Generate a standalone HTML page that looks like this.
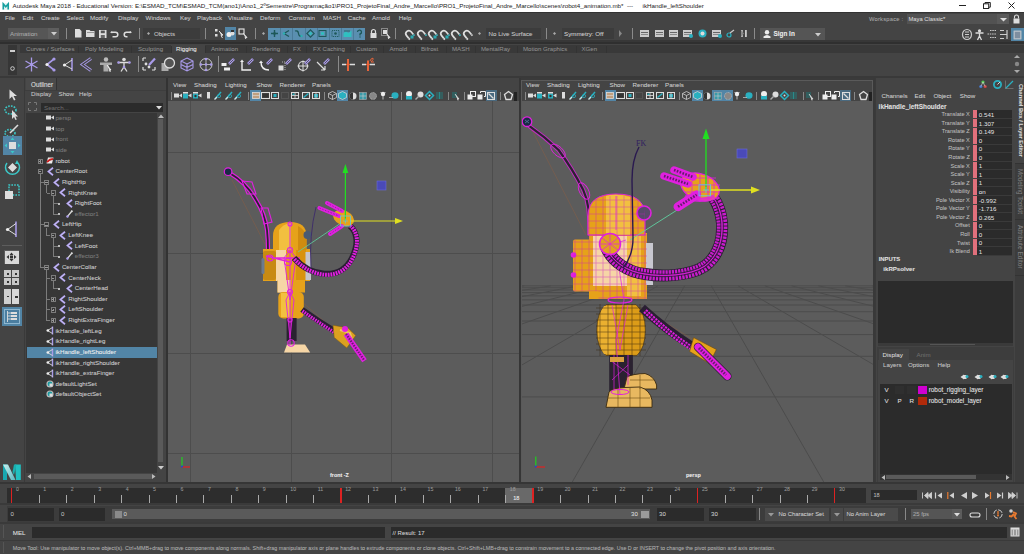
<!DOCTYPE html><html><head><meta charset="utf-8"><style>
*{margin:0;padding:0;box-sizing:border-box}
html,body{width:1024px;height:554px;overflow:hidden;background:#444;font-family:"Liberation Sans",sans-serif;font-size:6.2px;color:#c8c8c8}
.a{position:absolute}
.t{position:absolute;white-space:nowrap;line-height:1;-webkit-text-stroke:0.06px currentColor}
.f{position:absolute;background:#2b2b2b}
.sp{position:absolute;width:1px;background:#7a7a7a}
svg{position:absolute;overflow:visible}
</style></head><body>
<div class="a" style="left:0px;top:0px;width:1024px;height:12px;background:#fff;"></div>
<svg style="left:1.5px;top:2.5px;" width="7.5" height="7" viewBox="0 0 7.5 7"><rect x="0" y="0" width="7.5" height="7" fill="#e8f4f4"/><path d="M1.3 6.5V1L3.75 3.8L6.2 1V6.5" stroke="#17a0a0" stroke-width="1.6" fill="none"/></svg>
<div class="t" style="left:12.5px;top:2.6px;color:#1a1a1a;font-size:6.23px;-webkit-text-stroke:0">Autodesk Maya 2018 - Educational Version: E:\ESMAD_TCM\ESMAD_TCM(ano1)\Ano1_2ºSemestre\Programação1\PRO1_ProjetoFinal_Andre_Marcello\PRO1_ProjetoFinal_Andre_Marcello\scenes\robot4_animation.mb*</div>
<div class="t" style="left:627px;top:2.6px;color:#1a1a1a;font-size:6.2px;-webkit-text-stroke:0">---</div>
<div class="t" style="left:642.6px;top:2.6px;color:#1a1a1a;font-size:6.25px;-webkit-text-stroke:0">ikHandle_leftShoulder</div>
<div class="a" style="left:959px;top:5px;width:7px;height:1px;background:#222;"></div>
<svg style="left:983px;top:1.8px;" width="8" height="7" viewBox="0 0 8 7"><rect x="0.5" y="1.8" width="5.2" height="4.7" fill="none" stroke="#222" stroke-width="1"/><path d="M2 1.8V0.5H7.3V5.2H5.7" fill="none" stroke="#222" stroke-width="1"/></svg>
<svg style="left:1007.5px;top:1.8px;" width="7" height="7" viewBox="0 0 7 7"><path d="M0.5 0.5L6.5 6.5M6.5 0.5L0.5 6.5" stroke="#222" stroke-width="1"/></svg>
<div class="a" style="left:0px;top:12px;width:1024px;height:12px;background:#444;"></div>
<div class="a" style="left:0px;top:12px;width:1024px;height:1px;background:#333;"></div>
<div class="t" style="left:5px;top:14.8px;color:#cfcfcf">File</div>
<div class="t" style="left:22.5px;top:14.8px;color:#cfcfcf">Edit</div>
<div class="t" style="left:41px;top:14.8px;color:#cfcfcf">Create</div>
<div class="t" style="left:66.5px;top:14.8px;color:#cfcfcf">Select</div>
<div class="t" style="left:90px;top:14.8px;color:#cfcfcf">Modify</div>
<div class="t" style="left:118px;top:14.8px;color:#cfcfcf">Display</div>
<div class="t" style="left:145.6px;top:14.8px;color:#cfcfcf">Windows</div>
<div class="t" style="left:180px;top:14.8px;color:#cfcfcf">Key</div>
<div class="t" style="left:197px;top:14.8px;color:#cfcfcf">Playback</div>
<div class="t" style="left:228px;top:14.8px;color:#cfcfcf">Visualize</div>
<div class="t" style="left:260px;top:14.8px;color:#cfcfcf">Deform</div>
<div class="t" style="left:288.5px;top:14.8px;color:#cfcfcf">Constrain</div>
<div class="t" style="left:323px;top:14.8px;color:#cfcfcf">MASH</div>
<div class="t" style="left:347.8px;top:14.8px;color:#cfcfcf">Cache</div>
<div class="t" style="left:372px;top:14.8px;color:#cfcfcf">Arnold</div>
<div class="t" style="left:398.7px;top:14.8px;color:#cfcfcf">Help</div>
<div class="t" style="left:869px;top:16.6px;color:#a8a8a8;font-size:5.8px;letter-spacing:0.2px">Workspace :</div>
<div class="a" style="left:907px;top:14px;width:102px;height:10px;background:#525252;"></div>
<div class="a" style="left:997px;top:14px;width:12px;height:10px;background:#5a5a5a;"></div>
<svg style="left:999.5px;top:17.5px;" width="7" height="4" viewBox="0 0 7 4"><path d="M0 0H7L3.5 3.5Z" fill="#ddd"/></svg>
<div class="t" style="left:908.5px;top:16.5px;color:#d8d8d8;font-size:5.8px">Maya Classic*</div>
<svg style="left:1013px;top:14px;" width="7" height="10" viewBox="0 0 7 10"><path d="M1.5 4.5V3A2 2 0 0 1 5.5 3V4.5" stroke="#ddd" stroke-width="1.1" fill="none"/><rect x="0.5" y="4.5" width="6" height="5" fill="#ddd"/></svg>
<div class="a" style="left:0px;top:24px;width:1024px;height:18px;background:#444;"></div>
<div class="a" style="left:0px;top:40px;width:1024px;height:2px;background:#373737;"></div>
<div class="a" style="left:8px;top:28px;width:51px;height:11px;background:#565656;"></div>
<div class="a" style="left:48px;top:28px;width:11px;height:11px;background:#5e5e5e;"></div>
<svg style="left:50.5px;top:32px;" width="6" height="3.5" viewBox="0 0 6 3.5"><path d="M0 0H6L3 3.5Z" fill="#ccc"/></svg>
<div class="t" style="left:10px;top:31px;color:#a9a9a9">Animation</div>
<div class="sp" style="left:65.5px;top:27.5px;height:11px;background:#8a8a8a"></div>
<svg style="left:74.5px;top:29px;" width="7" height="9" viewBox="0 0 7 9"><path d="M0 0H4.5L6.5 2V8.5H0Z" fill="#ddd"/></svg>
<svg style="left:85.8px;top:30px;" width="9" height="7" viewBox="0 0 9 7"><path d="M0 0H3.5L4.5 1H8.5V7H0Z" fill="#ddd"/><path d="M1 2.5H8" stroke="#777" stroke-width="0.7"/></svg>
<svg style="left:98.7px;top:29.5px;" width="8" height="8" viewBox="0 0 8 8"><rect x="0" y="0" width="7.5" height="8" fill="#ddd"/><rect x="1.8" y="0.6" width="4" height="2.6" fill="#555"/><rect x="1.8" y="5" width="4" height="3" fill="#666"/></svg>
<svg style="left:110.4px;top:31px;" width="8.5" height="6.5" viewBox="0 0 8.5 6.5"><path d="M1.5 1.2H5.5A2.3 2.3 0 0 1 5.5 5.8H2.5" stroke="#ddd" stroke-width="1.5" fill="none"/><path d="M0 1.2L2.2 0V2.4Z" fill="#ddd"/></svg>
<svg style="left:122.5px;top:31px;" width="9" height="6.5" viewBox="0 0 9 6.5"><path d="M8 1.2H3.5A2.3 2.3 0 0 0 3.5 5.8H4.5" stroke="#ddd" stroke-width="1.5" fill="none"/><path d="M9 1.2L6.8 0V2.4Z" fill="#ddd"/></svg>
<div class="sp" style="left:139px;top:27.5px;height:11px;background:#8a8a8a"></div>
<div class="a" style="left:143px;top:28px;width:57px;height:11px;background:#3c3c3c;"></div>
<svg style="left:147px;top:32px;" width="3" height="3" viewBox="0 0 3 3"><path d="M0 1.5L1.5 0L3 1.5L1.5 3Z" fill="#aaa"/></svg>
<div class="t" style="left:154px;top:31px;color:#c8c8c8">Objects</div>
<div class="sp" style="left:205px;top:27.5px;height:11px;background:#8a8a8a"></div>
<svg style="left:214px;top:28px;" width="10" height="11" viewBox="0 0 10 11"><rect x="1" y="1" width="2.5" height="2.5" fill="#ddd"/><rect x="1" y="6" width="2.5" height="2.5" fill="#ddd"/><path d="M5 3L9 7L7 7.5L8.5 10" stroke="#ddd" stroke-width="1" fill="#ddd"/></svg>
<div class="a" style="left:225px;top:27px;width:11px;height:13px;background:#5285a6;"></div>
<svg style="left:226px;top:29px;" width="9" height="9" viewBox="0 0 9 9"><circle cx="3" cy="5.5" r="2.5" fill="#eee"/><circle cx="6.5" cy="4.5" r="2" fill="#ddd"/><rect x="5" y="1" width="3" height="2" fill="#333"/></svg>
<svg style="left:238px;top:28px;" width="10" height="11" viewBox="0 0 10 11"><rect x="1" y="1" width="5" height="5" fill="none" stroke="#ddd" stroke-width="1.2"/><path d="M5 5L9 9.5L7 9.6L8 11" stroke="#ddd" stroke-width="1" fill="#ddd"/></svg>
<div class="sp" style="left:255px;top:27.5px;height:11px;background:#8a8a8a"></div>
<svg style="left:262px;top:32px;" width="3" height="3" viewBox="0 0 3 3"><path d="M0 1.5L1.5 0L3 1.5L1.5 3Z" fill="#aaa"/></svg>
<div class="a" style="left:267.8px;top:27.6px;width:97.5px;height:12.3px;background:#5a8fb0;"></div>
<svg style="left:269.6px;top:29.3px;" width="9" height="9" viewBox="0 0 9 9"><path d="M4.5 1V8M1 4.5H8" stroke="#1d5858" stroke-width="1.4"/><circle cx="4.5" cy="4.5" r="1.3" fill="#1d5858"/></svg>
<div class="a" style="left:280.19px;top:27.6px;width:0.8px;height:12.3px;background:#4a7a98;"></div>
<svg style="left:281.79px;top:29.3px;" width="9" height="9" viewBox="0 0 9 9"><path d="M7 1.5L2 4.5L7 7.5" stroke="#1d5858" stroke-width="1.3" fill="none"/><circle cx="2" cy="4.5" r="1.2" fill="#2ab0b0"/></svg>
<div class="a" style="left:292.38px;top:27.6px;width:0.8px;height:12.3px;background:#4a7a98;"></div>
<svg style="left:293.98px;top:29.3px;" width="9" height="9" viewBox="0 0 9 9"><path d="M1 2Q4 1 4.5 4.5T8 7" stroke="#1d5858" stroke-width="1.3" fill="none"/><circle cx="7.5" cy="7" r="1.2" fill="#2ab0b0"/></svg>
<div class="a" style="left:304.57px;top:27.6px;width:0.8px;height:12.3px;background:#4a7a98;"></div>
<svg style="left:306.17px;top:29.3px;" width="9" height="9" viewBox="0 0 9 9"><path d="M4.5 0.8L8.2 4.5L4.5 8.2L0.8 4.5Z" stroke="#1d5858" stroke-width="1.1" fill="none"/><circle cx="4.5" cy="4.5" r="1.4" fill="#30c0c0"/></svg>
<div class="a" style="left:316.76px;top:27.6px;width:0.8px;height:12.3px;background:#4a7a98;"></div>
<svg style="left:318.36px;top:29.3px;" width="9" height="9" viewBox="0 0 9 9"><rect x="1" y="1.5" width="7" height="6" stroke="#1d5858" stroke-width="1" fill="none"/><rect x="3" y="3.2" width="3" height="2.6" fill="#30c0c0"/></svg>
<div class="a" style="left:328.95px;top:27.6px;width:0.8px;height:12.3px;background:#4a7a98;"></div>
<svg style="left:330.55px;top:29.3px;" width="9" height="9" viewBox="0 0 9 9"><rect x="1" y="1.5" width="7" height="6" stroke="#1d5858" stroke-width="0.9" fill="none" stroke-dasharray="1.2 0.8"/><circle cx="4.5" cy="4.5" r="1.3" fill="#1d5858"/></svg>
<div class="a" style="left:341.14px;top:27.6px;width:0.8px;height:12.3px;background:#4a7a98;"></div>
<svg style="left:342.74px;top:29.3px;" width="9" height="9" viewBox="0 0 9 9"><path d="M0.5 8V4L3 2.5L5.5 4L8.5 1.5V8Z" fill="#30c0c0"/><path d="M2 1V3M4 1V3M6 1V3" stroke="#1d5858" stroke-width="0.8"/></svg>
<div class="a" style="left:353.33px;top:27.6px;width:0.8px;height:12.3px;background:#4a7a98;"></div>
<svg style="left:354.93px;top:29.3px;" width="9" height="9" viewBox="0 0 9 9"><path d="M2.5 3A2 2 0 1 1 5 5V6.5" stroke="#1d5858" stroke-width="1.3" fill="none"/><circle cx="5" cy="8" r="0.7" fill="#1d5858"/></svg>
<svg style="left:370px;top:29px;" width="7" height="9" viewBox="0 0 7 9"><path d="M1.5 4V2.5A2 2 0 0 1 5.5 2.5V4" stroke="#ddd" stroke-width="1.2" fill="none"/><rect x="0.5" y="4" width="6" height="5" fill="#ddd"/></svg>
<svg style="left:381px;top:28px;" width="10" height="11" viewBox="0 0 10 11"><rect x="0.5" y="0.5" width="6" height="7" fill="none" stroke="#ccc" stroke-width="1" stroke-dasharray="1 1"/><rect x="2" y="2" width="4" height="4" fill="#ddd"/><path d="M5 5L9 9.5L7 9.6L8 11" stroke="#ddd" stroke-width="1" fill="#ddd"/></svg>
<div class="sp" style="left:395px;top:27.5px;height:11px;background:#8a8a8a"></div>
<svg style="left:404.0px;top:28.5px;" width="11" height="11" viewBox="0 0 11 11"><g transform="rotate(-40 5.5 5.5)"><path d="M2.5 8V4.5A3 3 0 0 1 8.5 4.5V8" stroke="#ddd" stroke-width="1.7" fill="none"/><rect x="1.6" y="8" width="1.8" height="1.6" fill="#ddd"/><rect x="7.6" y="8" width="1.8" height="1.6" fill="#3fb8c0"/></g><rect x="6.5" y="6.5" width="3" height="3" fill="#2aa8b0"/></svg>
<svg style="left:415.6px;top:28.5px;" width="11" height="11" viewBox="0 0 11 11"><g transform="rotate(-40 5.5 5.5)"><path d="M2.5 8V4.5A3 3 0 0 1 8.5 4.5V8" stroke="#ddd" stroke-width="1.7" fill="none"/><rect x="1.6" y="8" width="1.8" height="1.6" fill="#ddd"/><rect x="7.6" y="8" width="1.8" height="1.6" fill="#3fb8c0"/></g></svg>
<svg style="left:427.2px;top:28.5px;" width="11" height="11" viewBox="0 0 11 11"><g transform="rotate(-40 5.5 5.5)"><path d="M2.5 8V4.5A3 3 0 0 1 8.5 4.5V8" stroke="#ddd" stroke-width="1.7" fill="none"/><rect x="1.6" y="8" width="1.8" height="1.6" fill="#ddd"/><rect x="7.6" y="8" width="1.8" height="1.6" fill="#3fb8c0"/></g><rect x="6.5" y="6.5" width="3" height="3" fill="#2aa8b0"/></svg>
<svg style="left:438.8px;top:28.5px;" width="11" height="11" viewBox="0 0 11 11"><g transform="rotate(-40 5.5 5.5)"><path d="M2.5 8V4.5A3 3 0 0 1 8.5 4.5V8" stroke="#ddd" stroke-width="1.7" fill="none"/><rect x="1.6" y="8" width="1.8" height="1.6" fill="#ddd"/><rect x="7.6" y="8" width="1.8" height="1.6" fill="#3fb8c0"/></g><rect x="6.5" y="6.5" width="3" height="3" fill="#2aa8b0"/></svg>
<svg style="left:450.4px;top:28.5px;" width="11" height="11" viewBox="0 0 11 11"><g transform="rotate(-40 5.5 5.5)"><path d="M2.5 8V4.5A3 3 0 0 1 8.5 4.5V8" stroke="#ddd" stroke-width="1.7" fill="none"/><rect x="1.6" y="8" width="1.8" height="1.6" fill="#ddd"/><rect x="7.6" y="8" width="1.8" height="1.6" fill="#3fb8c0"/></g></svg>
<svg style="left:462.0px;top:28.5px;" width="11" height="11" viewBox="0 0 11 11"><g transform="rotate(-40 5.5 5.5)"><path d="M2.5 8V4.5A3 3 0 0 1 8.5 4.5V8" stroke="#ddd" stroke-width="1.7" fill="none"/><rect x="1.6" y="8" width="1.8" height="1.6" fill="#ddd"/><rect x="7.6" y="8" width="1.8" height="1.6" fill="#ccc"/></g></svg>
<svg style="left:478px;top:32px;" width="3" height="3" viewBox="0 0 3 3"><path d="M0 1.5L1.5 0L3 1.5L1.5 3Z" fill="#aaa"/></svg>
<div class="a" style="left:486px;top:28px;width:55px;height:11px;background:#3c3c3c;"></div>
<div class="t" style="left:488.5px;top:31px;color:#c8c8c8">No Live Surface</div>
<div class="sp" style="left:546px;top:27.5px;height:11px;background:#8a8a8a"></div>
<svg style="left:553px;top:32px;" width="3" height="3" viewBox="0 0 3 3"><path d="M0 1.5L1.5 0L3 1.5L1.5 3Z" fill="#aaa"/></svg>
<div class="a" style="left:562px;top:28px;width:52px;height:11px;background:#3c3c3c;"></div>
<div class="t" style="left:564px;top:31px;color:#d0d0d0">Symmetry: Off</div>
<svg style="left:619px;top:30px;" width="3" height="7" viewBox="0 0 3 7"><path d="M0 0L3 3.5L0 7Z" fill="#888"/></svg>
<div class="sp" style="left:631.5px;top:27.5px;height:11px;background:#8a8a8a"></div>
<svg style="left:640px;top:29px;" width="10" height="9" viewBox="0 0 10 9"><rect x="0" y="1" width="9" height="7" fill="#ccc"/><rect x="1" y="3" width="7" height="1" fill="#666"/><rect x="1" y="5" width="7" height="1" fill="#888"/></svg>
<svg style="left:654.5px;top:29px;" width="10" height="9" viewBox="0 0 10 9"><rect x="0" y="1" width="9" height="7" fill="#ccc"/><rect x="1" y="3" width="7" height="1" fill="#666"/><rect x="1" y="5" width="7" height="1" fill="#888"/></svg>
<svg style="left:668.5px;top:29px;" width="10" height="9" viewBox="0 0 10 9"><rect x="0" y="1" width="9" height="7" fill="#ccc"/><rect x="1" y="3" width="7" height="1" fill="#666"/><rect x="1" y="5" width="7" height="1" fill="#888"/></svg>
<svg style="left:683px;top:29px;" width="10" height="9" viewBox="0 0 10 9"><rect x="0" y="1" width="9" height="7" fill="#ccc"/><rect x="1" y="3" width="7" height="1" fill="#666"/><rect x="1" y="5" width="7" height="1" fill="#888"/><circle cx="8" cy="7" r="2" fill="#2ab0c0"/></svg>
<svg style="left:697.5px;top:29px;" width="9" height="9" viewBox="0 0 9 9"><circle cx="4.5" cy="4.5" r="4" fill="#2ab0c0"/><circle cx="4.5" cy="4.5" r="2" fill="#ddd"/></svg>
<svg style="left:712px;top:29px;" width="10" height="9" viewBox="0 0 10 9"><rect x="0" y="1" width="9" height="7" fill="#ccc"/><rect x="1" y="3" width="7" height="1" fill="#666"/><rect x="1" y="5" width="7" height="1" fill="#888"/><circle cx="8" cy="7" r="2" fill="#2ab0c0"/></svg>
<svg style="left:726px;top:29px;" width="9" height="9" viewBox="0 0 9 9"><circle cx="3" cy="6" r="2" fill="none" stroke="#2ab0c0" stroke-width="1.2"/><path d="M4 4L8 1" stroke="#ccc" stroke-width="1.2"/></svg>
<svg style="left:740px;top:29px;" width="8" height="9" viewBox="0 0 8 9"><rect x="1" y="1" width="1.8" height="7" fill="#ccc"/><rect x="5" y="1" width="1.8" height="7" fill="#ccc"/></svg>
<svg style="left:741px;top:30px;" width="3" height="7" viewBox="0 0 3 7"><path d="M0 0L3 3.5L0 7Z" fill="#888"/></svg>
<div class="sp" style="left:754px;top:27.5px;height:11px;background:#8a8a8a"></div>
<div class="a" style="left:760px;top:27.5px;width:65px;height:12.5px;background:#555;"></div>
<svg style="left:763px;top:29.5px;" width="8" height="8" viewBox="0 0 8 8"><circle cx="4" cy="2.3" r="2.2" fill="#eee"/><path d="M0.5 8V6.5Q4 3.5 7.5 6.5V8Z" fill="#eee"/></svg>
<div class="t" style="left:773.5px;top:31px;color:#eee;font-weight:bold;font-size:6.4px">Sign In</div>
<svg style="left:815px;top:32.5px;" width="6" height="3.5" viewBox="0 0 6 3.5"><path d="M0 0H6L3 3.5Z" fill="#ccc"/></svg>
<svg style="left:962px;top:28.5px;" width="10" height="11" viewBox="0 0 10 11"><ellipse cx="5" cy="5.5" rx="4.5" ry="5" fill="none" stroke="#ccc" stroke-width="1.2"/><path d="M3 3H7M3 5.5H7M3 8H7" stroke="#ccc" stroke-width="1"/></svg>
<svg style="left:975px;top:28.5px;" width="9" height="11" viewBox="0 0 9 11"><circle cx="4.5" cy="1.8" r="1.6" fill="#ddd"/><path d="M0.5 4H8.5M4.5 4V7M2.5 11L4.5 7L6.5 11" stroke="#ddd" stroke-width="1.3" fill="none"/></svg>
<svg style="left:987px;top:28.5px;" width="10" height="11" viewBox="0 0 10 11"><path d="M3 1.5H9M0.5 5H9M3 8.5H9" stroke="#ccc" stroke-width="1.2" stroke-dasharray="1.5 0.8"/></svg>
<svg style="left:999px;top:28.5px;" width="9" height="11" viewBox="0 0 9 11"><path d="M1 1.5H5M1 5.5H8M1 9.5H5M8 1V10" stroke="#ccc" stroke-width="1.2"/></svg>
<div class="a" style="left:1010.5px;top:28px;width:13.5px;height:12.5px;background:#5285a6;"></div>
<svg style="left:1013px;top:29.5px;" width="9" height="10" viewBox="0 0 9 10"><rect x="1" y="1" width="7" height="8" fill="#9ab" stroke="#ccc" stroke-width="0.8"/><path d="M2 3H7M2 5H7M2 7H7" stroke="#567" stroke-width="0.8"/></svg>
<div class="a" style="left:0px;top:42px;width:1024px;height:36px;background:#444;"></div>
<div class="a" style="left:0px;top:42px;width:1024px;height:2px;background:#2f2f2f;"></div>
<div class="a" style="left:8px;top:45px;width:9px;height:30px;background:#363636;"></div>
<div class="a" style="left:10px;top:50px;width:5px;height:2px;background:#cfcfcf;"></div>
<svg style="left:10px;top:66px;" width="5" height="5" viewBox="0 0 5 5"><circle cx="2.5" cy="2.5" r="1.8" fill="none" stroke="#ccc" stroke-width="1"/></svg>
<div class="a" style="left:20px;top:44.8px;width:1004px;height:7.8px;background:#393939;"></div>
<div class="t" style="left:26px;top:45.9px;color:#8e8e8e;font-size:6.1px">Curves / Surfaces</div>
<div class="t" style="left:85px;top:45.9px;color:#8e8e8e;font-size:6.1px">Poly Modeling</div>
<div class="t" style="left:138px;top:45.9px;color:#8e8e8e;font-size:6.1px">Sculpting</div>
<div class="a" style="left:171px;top:44.8px;width:34px;height:9px;background:#444;"></div>
<div class="t" style="left:176px;top:45.9px;color:#e8e8e8;font-size:6.1px">Rigging</div>
<div class="t" style="left:211px;top:45.9px;color:#8e8e8e;font-size:6.1px">Animation</div>
<div class="t" style="left:252px;top:45.9px;color:#8e8e8e;font-size:6.1px">Rendering</div>
<div class="t" style="left:293px;top:45.9px;color:#8e8e8e;font-size:6.1px">FX</div>
<div class="t" style="left:313px;top:45.9px;color:#8e8e8e;font-size:6.1px">FX Caching</div>
<div class="t" style="left:356px;top:45.9px;color:#8e8e8e;font-size:6.1px">Custom</div>
<div class="t" style="left:389.5px;top:45.9px;color:#8e8e8e;font-size:6.1px">Arnold</div>
<div class="t" style="left:421px;top:45.9px;color:#8e8e8e;font-size:6.1px">Bifrost</div>
<div class="t" style="left:452px;top:45.9px;color:#8e8e8e;font-size:6.1px">MASH</div>
<div class="t" style="left:481px;top:45.9px;color:#8e8e8e;font-size:6.1px">MentalRay</div>
<div class="t" style="left:523px;top:45.9px;color:#8e8e8e;font-size:6.1px">Motion Graphics</div>
<div class="t" style="left:581.5px;top:45.9px;color:#8e8e8e;font-size:6.1px">XGen</div>
<div class="a" style="left:78px;top:46px;width:1px;height:7px;background:#333;"></div>
<div class="a" style="left:131px;top:46px;width:1px;height:7px;background:#333;"></div>
<div class="a" style="left:171px;top:46px;width:1px;height:7px;background:#333;"></div>
<div class="a" style="left:205px;top:46px;width:1px;height:7px;background:#333;"></div>
<div class="a" style="left:246px;top:46px;width:1px;height:7px;background:#333;"></div>
<div class="a" style="left:287px;top:46px;width:1px;height:7px;background:#333;"></div>
<div class="a" style="left:306px;top:46px;width:1px;height:7px;background:#333;"></div>
<div class="a" style="left:350px;top:46px;width:1px;height:7px;background:#333;"></div>
<div class="a" style="left:383px;top:46px;width:1px;height:7px;background:#333;"></div>
<div class="a" style="left:415px;top:46px;width:1px;height:7px;background:#333;"></div>
<div class="a" style="left:446px;top:46px;width:1px;height:7px;background:#333;"></div>
<div class="a" style="left:475px;top:46px;width:1px;height:7px;background:#333;"></div>
<div class="a" style="left:517px;top:46px;width:1px;height:7px;background:#333;"></div>
<div class="a" style="left:576px;top:46px;width:1px;height:7px;background:#333;"></div>
<div class="a" style="left:606px;top:46px;width:1px;height:7px;background:#333;"></div>
<svg style="left:24.5px;top:56.5px;" width="14" height="15" viewBox="0 0 14 15"><path d="M6.5 0.5V14.5M0.5 4L12.5 11M12.5 4L0.5 11" stroke="#a89ae8" stroke-width="1.3"/><circle cx="6.5" cy="7.5" r="1.5" fill="#a89ae8"/></svg>
<svg style="left:44px;top:56.5px;" width="14" height="15" viewBox="0 0 14 15"><path d="M10 2L3 7.5L10 13" stroke="#a89ae8" stroke-width="1.6" fill="none"/><circle cx="10" cy="2" r="1.6" fill="#a89ae8"/><circle cx="3" cy="7.5" r="1.6" fill="#eee"/><circle cx="10" cy="13" r="1.6" fill="#a89ae8"/></svg>
<svg style="left:62px;top:56.5px;" width="14" height="15" viewBox="0 0 14 15"><path d="M10 1V14" stroke="#a89ae8" stroke-width="1.5"/><path d="M10 3L2.5 8L10 12" stroke="#ddd" stroke-width="1" fill="none"/><circle cx="2.5" cy="8" r="1.6" fill="#eee"/></svg>
<svg style="left:80px;top:56.5px;" width="14" height="15" viewBox="0 0 14 15"><path d="M11 1.5L2.5 7.5L11 13.5" stroke="#a89ae8" stroke-width="3.2" fill="none"/><path d="M11 1.5L2.5 7.5L11 13.5" stroke="#444" stroke-width="1.4" fill="none"/></svg>
<svg style="left:99px;top:56.5px;" width="14" height="15" viewBox="0 0 14 15"><circle cx="7" cy="2.5" r="2.2" fill="#bbb"/><path d="M1 5.5H13V8H9.5V14.5H4.5V8H1Z" fill="#aaa"/><path d="M8 8L12 13L10.5 13.2L11.3 15" stroke="#eee" stroke-width="1" fill="#eee"/></svg>
<svg style="left:117px;top:56.5px;" width="14" height="15" viewBox="0 0 14 15"><circle cx="7" cy="2.5" r="1.8" fill="#ddd"/><path d="M1 5.5H13M7 5.5V10M4 14.5L7 10L10 14.5" stroke="#ddd" stroke-width="1.3" fill="none"/><circle cx="1.5" cy="5.5" r="1.3" fill="#a89ae8"/><circle cx="12.5" cy="5.5" r="1.3" fill="#a89ae8"/><circle cx="7" cy="10" r="1.3" fill="#a89ae8"/></svg>
<div class="sp" style="left:137.5px;top:56px;height:16px;background:#8a8a8a"></div>
<svg style="left:142px;top:56.5px;" width="14" height="15" viewBox="0 0 14 15"><path d="M1 1H4M1 13H4M10 13H13M1 1V4M1 10V13M13 10V13" stroke="#ddd" stroke-width="1.2"/><circle cx="4" cy="7" r="1.4" fill="#ddd"/><circle cx="7" cy="10" r="1.4" fill="#ddd"/><path d="M7 8L13 1.5" stroke="#a89ae8" stroke-width="2.2"/></svg>
<svg style="left:161px;top:56.5px;" width="14" height="15" viewBox="0 0 14 15"><rect x="0.5" y="6" width="7" height="8" fill="#aaa"/><circle cx="8.5" cy="6" r="5" fill="#555" stroke="#ddd" stroke-width="1.3"/></svg>
<svg style="left:180px;top:56.5px;" width="14" height="15" viewBox="0 0 14 15"><path d="M7 1L13 4V11L7 14L1 11V4Z M1 4L7 7L13 4 M7 7V14 M1 7.5L7 10.5L13 7.5" stroke="#a89ae8" stroke-width="1.1" fill="none"/></svg>
<svg style="left:199px;top:56.5px;" width="14" height="15" viewBox="0 0 14 15"><circle cx="7" cy="7.5" r="6" stroke="#ccc" stroke-width="1" fill="none"/><path d="M1 7.5H13M7 1.5V13.5" stroke="#ccc" stroke-width="0.8"/><circle cx="7" cy="2" r="1.3" fill="#a89ae8"/><circle cx="7" cy="13" r="1.3" fill="#a89ae8"/><circle cx="2" cy="7.5" r="1.3" fill="#a89ae8"/><circle cx="12" cy="7.5" r="1.3" fill="#a89ae8"/><circle cx="7" cy="7.5" r="1.3" fill="#a89ae8"/></svg>
<div class="sp" style="left:218px;top:56px;height:16px;background:#8a8a8a"></div>
<svg style="left:221px;top:56.5px;" width="14" height="15" viewBox="0 0 14 15"><rect x="0.5" y="6" width="5" height="3" fill="#eee"/><rect x="3" y="10.5" width="6" height="3" fill="#eee"/><path d="M8 7L13 2" stroke="#a89ae8" stroke-width="2.6"/><path d="M8.5 6.5L12.5 2.5" stroke="#444" stroke-width="0.8"/></svg>
<svg style="left:240px;top:56.5px;" width="14" height="15" viewBox="0 0 14 15"><path d="M2 4V13H11" stroke="#eee" stroke-width="1.4" fill="none"/><path d="M0 5L2 2.5L4 5" fill="#eee"/><path d="M8 7L13 2" stroke="#a89ae8" stroke-width="2.6"/><path d="M8.5 6.5L12.5 2.5" stroke="#444" stroke-width="0.8"/></svg>
<svg style="left:259px;top:56.5px;" width="14" height="15" viewBox="0 0 14 15"><path d="M2 5Q2 13 10 13" stroke="#eee" stroke-width="1.4" fill="none"/><path d="M0 6L2 3.5L4 6" fill="#eee"/><path d="M8 7L13 2" stroke="#a89ae8" stroke-width="2.6"/><path d="M8.5 6.5L12.5 2.5" stroke="#444" stroke-width="0.8"/></svg>
<svg style="left:278px;top:56.5px;" width="14" height="15" viewBox="0 0 14 15"><rect x="0.5" y="8.5" width="5" height="5" fill="#ddd"/><path d="M4 5H7V13" stroke="#ccc" stroke-width="0.8" stroke-dasharray="1 1" fill="none"/><path d="M8 7L13 2" stroke="#a89ae8" stroke-width="2.6"/><path d="M8.5 6.5L12.5 2.5" stroke="#444" stroke-width="0.8"/></svg>
<svg style="left:297px;top:56.5px;" width="14" height="15" viewBox="0 0 14 15"><circle cx="6" cy="9" r="4.5" fill="none" stroke="#ddd" stroke-width="1.2"/><path d="M0.5 9H11.5M6 3.5V14.5" stroke="#ddd" stroke-width="1"/><path d="M8 7L13 2" stroke="#a89ae8" stroke-width="2.6"/><path d="M8.5 6.5L12.5 2.5" stroke="#444" stroke-width="0.8"/></svg>
<svg style="left:316px;top:56.5px;" width="14" height="15" viewBox="0 0 14 15"><path d="M1 5L9 13M9 13V9M9 13H5" stroke="#ddd" stroke-width="1.2" fill="none"/><path d="M8 7L13 2" stroke="#a89ae8" stroke-width="2.6"/><path d="M8.5 6.5L12.5 2.5" stroke="#444" stroke-width="0.8"/></svg>
<div class="sp" style="left:337.5px;top:56px;height:16px;background:#8a8a8a"></div>
<svg style="left:341px;top:56.5px;" width="14" height="15" viewBox="0 0 14 15"><path d="M1 7.5H5M9 7.5H14" stroke="#ddd" stroke-width="1.3"/><path d="M7 2V14" stroke="#e8643a" stroke-width="2"/><path d="M5 7.5H9" stroke="#e8643a" stroke-width="1.3"/></svg>
<svg style="left:361px;top:56.5px;" width="14" height="15" viewBox="0 0 14 15"><path d="M1 7.5H5M9 7.5H14" stroke="#ddd" stroke-width="1.3"/><path d="M7 3.5V14" stroke="#e8643a" stroke-width="2"/><path d="M5 7.5H9" stroke="#e8643a" stroke-width="1.3"/><path d="M9 4Q10 1 12 1.2Q13 2 10 5H13" stroke="#e8643a" stroke-width="1" fill="none"/></svg>
<div class="a" style="left:0px;top:76px;width:1024px;height:2px;background:#393939;"></div>
<svg style="left:1014px;top:55px;" width="6" height="18" viewBox="0 0 6 18"><path d="M0 3L3 0L6 3Z" fill="#aaa"/><circle cx="3" cy="9" r="2.2" fill="#888"/><path d="M0 15L3 18L6 15Z" fill="#aaa"/></svg>
<div class="a" style="left:0px;top:78px;width:1024px;height:406px;background:#3a3a3a;"></div>
<div class="a" style="left:0px;top:78px;width:23.5px;height:406px;background:#444;"></div>
<svg style="left:8.5px;top:88.5px;" width="9" height="12" viewBox="0 0 9 12"><path d="M0.5 0.5V10L3 7.5L5 11.5L6.5 10.8L4.6 7H8Z" fill="#ddd"/></svg>
<svg style="left:4px;top:105px;" width="16" height="15" viewBox="0 0 16 15"><ellipse cx="6.5" cy="5" rx="5.5" ry="4" fill="none" stroke="#3cc8c8" stroke-width="1.6" stroke-dasharray="1.6 1.2"/><path d="M8 5V14L10 12L11.5 15L12.8 14.4L11.4 11.5H14Z" fill="#ddd"/></svg>
<svg style="left:4px;top:124px;" width="16" height="14" viewBox="0 0 16 14"><ellipse cx="6" cy="9" rx="5" ry="3.5" fill="none" stroke="#3cc8c8" stroke-width="1.6" stroke-dasharray="1.6 1.2"/><path d="M6 9L14 1" stroke="#ddd" stroke-width="1.6"/></svg>
<div class="a" style="left:3px;top:136px;width:19px;height:19px;background:#5285a6;"></div>
<svg style="left:4px;top:137px;" width="17" height="17" viewBox="0 0 17 17"><rect x="5" y="5" width="7" height="7" fill="#ddd"/><path d="M8.5 0.5L6.5 3H10.5Z M8.5 16.5L6.5 14H10.5Z M0.5 8.5L3 6.5V10.5Z M16.5 8.5L14 6.5V10.5Z" fill="#3cc8c8"/></svg>
<svg style="left:4px;top:159px;" width="17" height="18" viewBox="0 0 17 18"><path d="M8.5 4L13 8.5L8.5 13L4 8.5Z" fill="#ddd"/><path d="M3 4A7 7 0 1 0 14 4" stroke="#3cc8c8" stroke-width="1.5" fill="none"/><path d="M13 1L15 5L11 5Z" fill="#3cc8c8"/></svg>
<svg style="left:4px;top:183px;" width="17" height="18" viewBox="0 0 17 18"><rect x="1" y="8" width="8" height="8" fill="#ddd"/><path d="M5 8V2H15V12H9" stroke="#3cc8c8" stroke-width="1.5" fill="none" stroke-dasharray="1.6 1.2"/></svg>
<svg style="left:5px;top:221px;" width="14" height="17" viewBox="0 0 14 17"><path d="M11 0.5V16" stroke="#a89ae8" stroke-width="1.6"/><path d="M11 2.5L2.5 8.5L11 14" stroke="#ddd" stroke-width="1" fill="none"/><circle cx="2.5" cy="8.5" r="1.6" fill="#eee"/></svg>
<div class="a" style="left:2px;top:244.5px;width:19.5px;height:1px;background:#5d5d5d;"></div>
<div class="a" style="left:4px;top:250px;width:15px;height:14px;background:#5c5c5c;"></div>
<div class="a" style="left:4.5px;top:250.5px;width:14px;height:13px;background:#d8d8d8;"></div>
<svg style="left:6px;top:252px;" width="11" height="10" viewBox="0 0 11 10"><path d="M5.5 0.5L3.5 3H7.5Z M5.5 9.5L3.5 7H7.5Z M0.5 5L3 3V7Z M10.5 5L8 3V7Z" fill="#333"/><rect x="4" y="3.5" width="3" height="3" fill="#333"/></svg>
<div class="a" style="left:4px;top:270px;width:7px;height:7px;background:#c8c8c8;"></div>
<div class="a" style="left:6.5px;top:272.5px;width:2px;height:2px;background:#333;"></div>
<div class="a" style="left:12px;top:270px;width:7px;height:7px;background:#c8c8c8;"></div>
<div class="a" style="left:14.5px;top:272.5px;width:2px;height:2px;background:#333;"></div>
<div class="a" style="left:4px;top:278px;width:7px;height:7px;background:#c8c8c8;"></div>
<div class="a" style="left:6.5px;top:280.5px;width:2px;height:2px;background:#333;"></div>
<div class="a" style="left:12px;top:278px;width:7px;height:7px;background:#c8c8c8;"></div>
<div class="a" style="left:14.5px;top:280.5px;width:2px;height:2px;background:#333;"></div>
<div class="a" style="left:4px;top:289px;width:7px;height:15px;background:#cfcfcf;"></div>
<div class="a" style="left:12px;top:289px;width:7px;height:15px;background:#d8d8d8;"></div>
<div class="a" style="left:6.5px;top:296px;width:2px;height:1px;background:#333;"></div>
<div class="a" style="left:14.5px;top:295.5px;width:3px;height:2px;background:#333;"></div>
<div class="a" style="left:2px;top:306.5px;width:19.5px;height:19.5px;background:#5285a6;"></div>
<div class="a" style="left:4px;top:308.5px;width:15.5px;height:15.5px;background:#4b7ea0;border:1px solid #8fb7d0"></div>
<svg style="left:6px;top:310px;" width="12" height="13" viewBox="0 0 12 13"><path d="M1.5 1V12M1.5 3H5M1.5 6H5M1.5 9H5" stroke="#ddd" stroke-width="0.9" fill="none"/><rect x="5" y="2" width="6" height="2" fill="#ddd"/><rect x="5" y="5" width="6" height="2" fill="#ddd"/><rect x="5" y="8" width="6" height="2" fill="#ddd"/></svg>
<svg style="left:2px;top:464px;" width="20" height="17" viewBox="0 0 20 17"><defs><linearGradient id="mg" x1="0" y1="0" x2="1" y2="1"><stop offset="0" stop-color="#c8f0f0"/><stop offset="1" stop-color="#5ab8c0"/></linearGradient></defs><path d="M1 0.5H5V16H1Z" fill="#18a8b0"/><path d="M13 0.5H18.8V16H14Z" fill="#20c0c0"/><path d="M1 0.5H6L13.5 16H9Z" fill="url(#mg)"/><path d="M12 0.5H14.5L12 11L10.5 8Z" fill="#18b0b0"/></svg>
<div class="a" style="left:24.5px;top:78px;width:141.5px;height:406px;background:#444;"></div>
<div class="a" style="left:25.5px;top:78px;width:30px;height:12px;background:#4a4a4a;"></div>
<div class="t" style="left:31px;top:81.5px;color:#e0e0e0;font-size:6.3px">Outliner</div>
<div class="a" style="left:55.5px;top:78px;width:1px;height:12px;background:#333;"></div>
<div class="a" style="left:25px;top:90px;width:141px;height:1px;background:#3d3d3d;"></div>
<div class="t" style="left:31px;top:91.2px;color:#c8c8c8">Display</div>
<div class="t" style="left:58.5px;top:91.2px;color:#c8c8c8">Show</div>
<div class="t" style="left:79px;top:91.2px;color:#c8c8c8">Help</div>
<svg style="left:28px;top:102px;" width="9" height="9" viewBox="0 0 9 9"><path d="M0.5 3V0.5H3M6 0.5H8.5V3M0.5 6V8.5H3M6 8.5H8.5V6" stroke="#777" stroke-width="1" fill="none"/></svg>
<div class="a" style="left:41.4px;top:102.6px;width:121.3px;height:9.6px;background:#2b2b2b;"></div>
<div class="t" style="left:44px;top:104.5px;color:#6a6a6a">Search...</div>
<svg style="left:155.5px;top:106px;" width="6" height="3.5" viewBox="0 0 6 3.5"><path d="M0 0H6L3 3.5Z" fill="#ddd"/></svg>
<div class="a" style="left:26px;top:113px;width:131px;height:367px;background:#373737;"></div>
<div class="a" style="left:157px;top:113px;width:7px;height:367px;background:#444;"></div>
<div class="a" style="left:158px;top:119px;width:5px;height:343px;background:#5a5a5a;"></div>
<svg style="left:157.5px;top:114px;" width="6" height="4" viewBox="0 0 6 4"><path d="M0 4L3 0.5L6 4Z" fill="#bbb"/></svg>
<svg style="left:157.5px;top:465.5px;" width="6" height="4" viewBox="0 0 6 4"><path d="M0 0L3 3.5L6 0Z" fill="#ccc"/></svg>
<div class="a" style="left:26px;top:473px;width:131px;height:7px;background:#444;"></div>
<div class="a" style="left:34px;top:474px;width:118px;height:5px;background:#5a5a5a;"></div>
<svg style="left:27px;top:474px;" width="4" height="5" viewBox="0 0 4 5"><path d="M4 0L0.5 2.5L4 5Z" fill="#bbb"/></svg>
<svg style="left:152px;top:474px;" width="4" height="5" viewBox="0 0 4 5"><path d="M0 0L3.5 2.5L0 5Z" fill="#bbb"/></svg>
<svg style="left:46.0px;top:115.3px;" width="8" height="5" viewBox="0 0 8 5"><rect x="0" y="0.5" width="5" height="4" fill="#ddd"/><path d="M5 2.5L8 0.5V4.5Z" fill="#ddd"/></svg>
<div class="t" style="left:55.5px;top:115.1px;color:#7a7a7a">persp</div>
<svg style="left:46.0px;top:125.92999999999999px;" width="8" height="5" viewBox="0 0 8 5"><rect x="0" y="0.5" width="5" height="4" fill="#ddd"/><path d="M5 2.5L8 0.5V4.5Z" fill="#ddd"/></svg>
<div class="t" style="left:55.5px;top:125.72999999999999px;color:#7a7a7a">top</div>
<svg style="left:46.0px;top:136.56px;" width="8" height="5" viewBox="0 0 8 5"><rect x="0" y="0.5" width="5" height="4" fill="#ddd"/><path d="M5 2.5L8 0.5V4.5Z" fill="#ddd"/></svg>
<div class="t" style="left:55.5px;top:136.36px;color:#7a7a7a">front</div>
<svg style="left:46.0px;top:147.19px;" width="8" height="5" viewBox="0 0 8 5"><rect x="0" y="0.5" width="5" height="4" fill="#ddd"/><path d="M5 2.5L8 0.5V4.5Z" fill="#ddd"/></svg>
<div class="t" style="left:55.5px;top:146.99px;color:#7a7a7a">side</div>
<svg style="left:45.5px;top:156.82px;" width="8" height="7" viewBox="0 0 8 7"><path d="M0.5 6.5L2 0.5H7.5L6 6.5Z" fill="#eee"/><path d="M1 5L4 2.5L7 2" stroke="#d02020" stroke-width="1.8"/></svg>
<div class="t" style="left:55.5px;top:157.62px;color:#cfcfcf">robot</div>
<svg style="left:46.5px;top:166.95px;" width="7" height="9" viewBox="0 0 7 9"><path d="M6 0.8L1.5 4.5L6 8.2" stroke="#a89ae8" stroke-width="1.9" fill="none"/><path d="M6 0.8L1.5 4.5L6 8.2" stroke="#e8e0ff" stroke-width="0.5" fill="none"/></svg>
<div class="t" style="left:55.5px;top:168.25px;color:#cfcfcf">CenterRoot</div>
<svg style="left:52.9px;top:177.57999999999998px;" width="7" height="9" viewBox="0 0 7 9"><path d="M6 0.8L1.5 4.5L6 8.2" stroke="#a89ae8" stroke-width="1.9" fill="none"/><path d="M6 0.8L1.5 4.5L6 8.2" stroke="#e8e0ff" stroke-width="0.5" fill="none"/></svg>
<div class="t" style="left:61.9px;top:178.88px;color:#cfcfcf">RightHip</div>
<svg style="left:59.3px;top:188.21px;" width="7" height="9" viewBox="0 0 7 9"><path d="M6 0.8L1.5 4.5L6 8.2" stroke="#a89ae8" stroke-width="1.9" fill="none"/><path d="M6 0.8L1.5 4.5L6 8.2" stroke="#e8e0ff" stroke-width="0.5" fill="none"/></svg>
<div class="t" style="left:68.3px;top:189.51000000000002px;color:#cfcfcf">RightKnee</div>
<svg style="left:65.7px;top:198.84px;" width="7" height="9" viewBox="0 0 7 9"><path d="M6 0.8L1.5 4.5L6 8.2" stroke="#a89ae8" stroke-width="1.9" fill="none"/><path d="M6 0.8L1.5 4.5L6 8.2" stroke="#e8e0ff" stroke-width="0.5" fill="none"/></svg>
<div class="t" style="left:74.7px;top:200.14000000000001px;color:#cfcfcf">RightFoot</div>
<svg style="left:65.7px;top:209.97px;" width="7" height="8" viewBox="0 0 7 8"><path d="M1 7L6 1" stroke="#ddd" stroke-width="1.2"/><circle cx="1.5" cy="6.5" r="1.2" fill="#a89ae8"/><circle cx="5.8" cy="1.3" r="1" fill="#ddd"/></svg>
<div class="t" style="left:74.7px;top:210.77px;color:#7a7a7a">effector1</div>
<svg style="left:52.9px;top:220.10000000000002px;" width="7" height="9" viewBox="0 0 7 9"><path d="M6 0.8L1.5 4.5L6 8.2" stroke="#a89ae8" stroke-width="1.9" fill="none"/><path d="M6 0.8L1.5 4.5L6 8.2" stroke="#e8e0ff" stroke-width="0.5" fill="none"/></svg>
<div class="t" style="left:61.9px;top:221.40000000000003px;color:#cfcfcf">LeftHip</div>
<svg style="left:59.3px;top:230.73000000000002px;" width="7" height="9" viewBox="0 0 7 9"><path d="M6 0.8L1.5 4.5L6 8.2" stroke="#a89ae8" stroke-width="1.9" fill="none"/><path d="M6 0.8L1.5 4.5L6 8.2" stroke="#e8e0ff" stroke-width="0.5" fill="none"/></svg>
<div class="t" style="left:68.3px;top:232.03000000000003px;color:#cfcfcf">LeftKnee</div>
<svg style="left:65.7px;top:241.36px;" width="7" height="9" viewBox="0 0 7 9"><path d="M6 0.8L1.5 4.5L6 8.2" stroke="#a89ae8" stroke-width="1.9" fill="none"/><path d="M6 0.8L1.5 4.5L6 8.2" stroke="#e8e0ff" stroke-width="0.5" fill="none"/></svg>
<div class="t" style="left:74.7px;top:242.66000000000003px;color:#cfcfcf">LeftFoot</div>
<svg style="left:65.7px;top:252.49px;" width="7" height="8" viewBox="0 0 7 8"><path d="M1 7L6 1" stroke="#ddd" stroke-width="1.2"/><circle cx="1.5" cy="6.5" r="1.2" fill="#a89ae8"/><circle cx="5.8" cy="1.3" r="1" fill="#ddd"/></svg>
<div class="t" style="left:74.7px;top:253.29000000000002px;color:#7a7a7a">effector3</div>
<svg style="left:52.9px;top:262.62px;" width="7" height="9" viewBox="0 0 7 9"><path d="M6 0.8L1.5 4.5L6 8.2" stroke="#a89ae8" stroke-width="1.9" fill="none"/><path d="M6 0.8L1.5 4.5L6 8.2" stroke="#e8e0ff" stroke-width="0.5" fill="none"/></svg>
<div class="t" style="left:61.9px;top:263.92px;color:#cfcfcf">CenterCollar</div>
<svg style="left:59.3px;top:273.25px;" width="7" height="9" viewBox="0 0 7 9"><path d="M6 0.8L1.5 4.5L6 8.2" stroke="#a89ae8" stroke-width="1.9" fill="none"/><path d="M6 0.8L1.5 4.5L6 8.2" stroke="#e8e0ff" stroke-width="0.5" fill="none"/></svg>
<div class="t" style="left:68.3px;top:274.55px;color:#cfcfcf">CenterNeck</div>
<svg style="left:65.7px;top:283.88px;" width="7" height="9" viewBox="0 0 7 9"><path d="M6 0.8L1.5 4.5L6 8.2" stroke="#a89ae8" stroke-width="1.9" fill="none"/><path d="M6 0.8L1.5 4.5L6 8.2" stroke="#e8e0ff" stroke-width="0.5" fill="none"/></svg>
<div class="t" style="left:74.7px;top:285.18px;color:#cfcfcf">CenterHead</div>
<svg style="left:59.3px;top:294.51px;" width="7" height="9" viewBox="0 0 7 9"><path d="M6 0.8L1.5 4.5L6 8.2" stroke="#a89ae8" stroke-width="1.9" fill="none"/><path d="M6 0.8L1.5 4.5L6 8.2" stroke="#e8e0ff" stroke-width="0.5" fill="none"/></svg>
<div class="t" style="left:68.3px;top:295.81px;color:#cfcfcf">RightShoulder</div>
<svg style="left:59.3px;top:305.14px;" width="7" height="9" viewBox="0 0 7 9"><path d="M6 0.8L1.5 4.5L6 8.2" stroke="#a89ae8" stroke-width="1.9" fill="none"/><path d="M6 0.8L1.5 4.5L6 8.2" stroke="#e8e0ff" stroke-width="0.5" fill="none"/></svg>
<div class="t" style="left:68.3px;top:306.44px;color:#cfcfcf">LeftShoulder</div>
<svg style="left:59.3px;top:315.77000000000004px;" width="7" height="9" viewBox="0 0 7 9"><path d="M6 0.8L1.5 4.5L6 8.2" stroke="#a89ae8" stroke-width="1.9" fill="none"/><path d="M6 0.8L1.5 4.5L6 8.2" stroke="#e8e0ff" stroke-width="0.5" fill="none"/></svg>
<div class="t" style="left:68.3px;top:317.07000000000005px;color:#cfcfcf">RightExtraFinger</div>
<svg style="left:46.0px;top:326.40000000000003px;" width="8" height="9" viewBox="0 0 8 9"><path d="M6.5 0.5V8.5" stroke="#a89ae8" stroke-width="1.4"/><path d="M6.5 1.5L1.5 4.5L6.5 7.5" stroke="#ddd" stroke-width="0.9" fill="none"/><circle cx="1.8" cy="4.5" r="1.3" fill="#eee"/></svg>
<div class="t" style="left:55.5px;top:327.70000000000005px;color:#cfcfcf">ikHandle_leftLeg</div>
<svg style="left:46.0px;top:337.03000000000003px;" width="8" height="9" viewBox="0 0 8 9"><path d="M6.5 0.5V8.5" stroke="#a89ae8" stroke-width="1.4"/><path d="M6.5 1.5L1.5 4.5L6.5 7.5" stroke="#ddd" stroke-width="0.9" fill="none"/><circle cx="1.8" cy="4.5" r="1.3" fill="#eee"/></svg>
<div class="t" style="left:55.5px;top:338.33000000000004px;color:#cfcfcf">ikHandle_rightLeg</div>
<div class="a" style="left:26.5px;top:347.16px;width:130.5px;height:10.8px;background:#5285a6;"></div>
<svg style="left:46.0px;top:347.66px;" width="8" height="9" viewBox="0 0 8 9"><path d="M6.5 0.5V8.5" stroke="#a89ae8" stroke-width="1.4"/><path d="M6.5 1.5L1.5 4.5L6.5 7.5" stroke="#ddd" stroke-width="0.9" fill="none"/><circle cx="1.8" cy="4.5" r="1.3" fill="#eee"/></svg>
<div class="t" style="left:55.5px;top:348.96000000000004px;color:#f0f0f0">ikHandle_leftShoulder</div>
<svg style="left:46.0px;top:358.29px;" width="8" height="9" viewBox="0 0 8 9"><path d="M6.5 0.5V8.5" stroke="#a89ae8" stroke-width="1.4"/><path d="M6.5 1.5L1.5 4.5L6.5 7.5" stroke="#ddd" stroke-width="0.9" fill="none"/><circle cx="1.8" cy="4.5" r="1.3" fill="#eee"/></svg>
<div class="t" style="left:55.5px;top:359.59000000000003px;color:#cfcfcf">ikHandle_rightShoulder</div>
<svg style="left:46.0px;top:368.92px;" width="8" height="9" viewBox="0 0 8 9"><path d="M6.5 0.5V8.5" stroke="#a89ae8" stroke-width="1.4"/><path d="M6.5 1.5L1.5 4.5L6.5 7.5" stroke="#ddd" stroke-width="0.9" fill="none"/><circle cx="1.8" cy="4.5" r="1.3" fill="#eee"/></svg>
<div class="t" style="left:55.5px;top:370.22px;color:#cfcfcf">ikHandle_extraFinger</div>
<svg style="left:46.0px;top:379.75px;" width="8" height="8" viewBox="0 0 8 8"><circle cx="4" cy="4" r="3.6" fill="#bbb"/><circle cx="4" cy="4" r="2.4" fill="#1a9aa0"/><rect x="3.5" y="3.5" width="3" height="3" fill="#ddd"/></svg>
<div class="t" style="left:55.5px;top:380.85px;color:#cfcfcf">defaultLightSet</div>
<svg style="left:46.0px;top:390.38px;" width="8" height="8" viewBox="0 0 8 8"><circle cx="4" cy="4" r="3.6" fill="#bbb"/><circle cx="4" cy="4" r="2.4" fill="#1a9aa0"/><rect x="3.5" y="3.5" width="3" height="3" fill="#ddd"/></svg>
<div class="t" style="left:55.5px;top:391.48px;color:#cfcfcf">defaultObjectSet</div>
<div class="a" style="left:37.5px;top:158.52px;width:5.2px;height:5.2px;border:0.8px solid #7c7c7c;background:#373737"></div>
<div class="a" style="left:38.7px;top:160.72px;width:2.8px;height:0.8px;background:#9a9a9a;"></div>
<div class="a" style="left:39.7px;top:159.72px;width:0.8px;height:2.8px;background:#9a9a9a;"></div>
<div class="a" style="left:37.5px;top:169.15px;width:5.2px;height:5.2px;border:0.8px solid #7c7c7c;background:#373737"></div>
<div class="a" style="left:38.7px;top:171.35px;width:2.8px;height:0.8px;background:#9a9a9a;"></div>
<div class="a" style="left:39.6px;top:174.35px;width:1px;height:93.07000000000002px;background:#7c7c7c;"></div>
<div class="a" style="left:44.0px;top:179.78px;width:5.2px;height:5.2px;border:0.8px solid #7c7c7c;background:#373737"></div>
<div class="a" style="left:45.2px;top:181.98px;width:2.8px;height:0.8px;background:#9a9a9a;"></div>
<div class="a" style="left:40.1px;top:181.88px;width:3.8999999999999986px;height:1px;background:#7c7c7c;"></div>
<div class="a" style="left:44.0px;top:222.30000000000004px;width:5.2px;height:5.2px;border:0.8px solid #7c7c7c;background:#373737"></div>
<div class="a" style="left:45.2px;top:224.50000000000003px;width:2.8px;height:0.8px;background:#9a9a9a;"></div>
<div class="a" style="left:40.1px;top:224.40000000000003px;width:3.8999999999999986px;height:1px;background:#7c7c7c;"></div>
<div class="a" style="left:44.0px;top:264.82px;width:5.2px;height:5.2px;border:0.8px solid #7c7c7c;background:#373737"></div>
<div class="a" style="left:45.2px;top:267.02000000000004px;width:2.8px;height:0.8px;background:#9a9a9a;"></div>
<div class="a" style="left:40.1px;top:266.92px;width:3.8999999999999986px;height:1px;background:#7c7c7c;"></div>
<div class="a" style="left:46.1px;top:184.98px;width:1px;height:8.03000000000003px;background:#7c7c7c;"></div>
<div class="a" style="left:50.5px;top:190.41000000000003px;width:5.2px;height:5.2px;border:0.8px solid #7c7c7c;background:#373737"></div>
<div class="a" style="left:51.7px;top:192.61px;width:2.8px;height:0.8px;background:#9a9a9a;"></div>
<div class="a" style="left:46.6px;top:192.51000000000002px;width:3.8999999999999986px;height:1px;background:#7c7c7c;"></div>
<div class="a" style="left:52.6px;top:195.61px;width:1px;height:18.659999999999997px;background:#7c7c7c;"></div>
<div class="a" style="left:53.1px;top:203.14000000000001px;width:5.899999999999999px;height:1px;background:#7c7c7c;"></div>
<div class="a" style="left:58px;top:202.64000000000001px;width:2px;height:2px;background:#bbb;"></div>
<div class="a" style="left:53.1px;top:213.77px;width:5.899999999999999px;height:1px;background:#7c7c7c;"></div>
<div class="a" style="left:58px;top:213.27px;width:2px;height:2px;background:#bbb;"></div>
<div class="a" style="left:46.1px;top:227.50000000000003px;width:1px;height:8.030000000000001px;background:#7c7c7c;"></div>
<div class="a" style="left:50.5px;top:232.93000000000004px;width:5.2px;height:5.2px;border:0.8px solid #7c7c7c;background:#373737"></div>
<div class="a" style="left:51.7px;top:235.13000000000002px;width:2.8px;height:0.8px;background:#9a9a9a;"></div>
<div class="a" style="left:46.6px;top:235.03000000000003px;width:3.8999999999999986px;height:1px;background:#7c7c7c;"></div>
<div class="a" style="left:52.6px;top:238.13000000000002px;width:1px;height:18.659999999999997px;background:#7c7c7c;"></div>
<div class="a" style="left:53.1px;top:245.66000000000003px;width:5.899999999999999px;height:1px;background:#7c7c7c;"></div>
<div class="a" style="left:58px;top:245.16000000000003px;width:2px;height:2px;background:#bbb;"></div>
<div class="a" style="left:53.1px;top:256.29px;width:5.899999999999999px;height:1px;background:#7c7c7c;"></div>
<div class="a" style="left:58px;top:255.79000000000002px;width:2px;height:2px;background:#bbb;"></div>
<div class="a" style="left:46.1px;top:270.02000000000004px;width:1px;height:50.55000000000001px;background:#7c7c7c;"></div>
<div class="a" style="left:50.5px;top:275.45px;width:5.2px;height:5.2px;border:0.8px solid #7c7c7c;background:#373737"></div>
<div class="a" style="left:51.7px;top:277.65000000000003px;width:2.8px;height:0.8px;background:#9a9a9a;"></div>
<div class="a" style="left:46.6px;top:277.55px;width:3.8999999999999986px;height:1px;background:#7c7c7c;"></div>
<div class="a" style="left:50.5px;top:296.71px;width:5.2px;height:5.2px;border:0.8px solid #7c7c7c;background:#373737"></div>
<div class="a" style="left:51.7px;top:298.91px;width:2.8px;height:0.8px;background:#9a9a9a;"></div>
<div class="a" style="left:52.7px;top:297.91px;width:0.8px;height:2.8px;background:#9a9a9a;"></div>
<div class="a" style="left:46.6px;top:298.81px;width:3.8999999999999986px;height:1px;background:#7c7c7c;"></div>
<div class="a" style="left:50.5px;top:307.34px;width:5.2px;height:5.2px;border:0.8px solid #7c7c7c;background:#373737"></div>
<div class="a" style="left:51.7px;top:309.54px;width:2.8px;height:0.8px;background:#9a9a9a;"></div>
<div class="a" style="left:52.7px;top:308.54px;width:0.8px;height:2.8px;background:#9a9a9a;"></div>
<div class="a" style="left:46.6px;top:309.44px;width:3.8999999999999986px;height:1px;background:#7c7c7c;"></div>
<div class="a" style="left:50.5px;top:317.97px;width:5.2px;height:5.2px;border:0.8px solid #7c7c7c;background:#373737"></div>
<div class="a" style="left:51.7px;top:320.1700000000001px;width:2.8px;height:0.8px;background:#9a9a9a;"></div>
<div class="a" style="left:52.7px;top:319.1700000000001px;width:0.8px;height:2.8px;background:#9a9a9a;"></div>
<div class="a" style="left:46.6px;top:320.07000000000005px;width:3.8999999999999986px;height:1px;background:#7c7c7c;"></div>
<div class="a" style="left:52.6px;top:280.65000000000003px;width:1px;height:8.029999999999973px;background:#7c7c7c;"></div>
<div class="a" style="left:53.1px;top:288.18px;width:5.899999999999999px;height:1px;background:#7c7c7c;"></div>
<div class="a" style="left:58px;top:287.68px;width:2px;height:2px;background:#bbb;"></div>
<div class="a" style="left:167px;top:78px;width:352px;height:405px;background:#444;"></div>
<div class="t" style="left:173px;top:81.8px;color:#cfcfcf">View</div>
<div class="t" style="left:194px;top:81.8px;color:#cfcfcf">Shading</div>
<div class="t" style="left:225px;top:81.8px;color:#cfcfcf">Lighting</div>
<div class="t" style="left:256.5px;top:81.8px;color:#cfcfcf">Show</div>
<div class="t" style="left:279.5px;top:81.8px;color:#cfcfcf">Renderer</div>
<div class="t" style="left:312px;top:81.8px;color:#cfcfcf">Panels</div>
<div class="sp" style="left:170.5px;top:91.5px;height:8px;background:#888"></div>
<svg style="left:173.6px;top:93.0px;" width="8" height="5" viewBox="0 0 8 5"><rect x="0" y="0.5" width="5" height="4" fill="#ddd"/><path d="M5 2.5L8 0.5V4.5Z" fill="#ddd"/></svg>
<svg style="left:182.7px;top:92.0px;" width="9" height="7" viewBox="0 0 9 7"><rect x="0" y="1.5" width="5" height="5" fill="#2ab0c0"/><rect x="0" y="0" width="5" height="1.5" fill="#ddd"/><path d="M5 3.5L8.5 1.5V5.5Z" fill="#ddd"/></svg>
<svg style="left:193.3px;top:92.0px;" width="9" height="7" viewBox="0 0 9 7"><rect x="0" y="1.5" width="5" height="5" fill="#2ab0c0"/><circle cx="2.5" cy="4" r="1.2" fill="#333"/><rect x="0" y="0" width="5" height="1.5" fill="#ddd"/><path d="M5 3.5L8.5 1.5V5.5Z" fill="#ddd"/></svg>
<svg style="left:207.2px;top:92.0px;" width="4" height="7" viewBox="0 0 4 7"><rect x="0" y="0" width="3" height="6.5" fill="#ddd"/></svg>
<svg style="left:214.4px;top:91.0px;" width="9" height="9" viewBox="0 0 9 9"><path d="M1 8L7 1" stroke="#2ab0c0" stroke-width="1.5"/><path d="M0.5 8.5L3 6" stroke="#ddd" stroke-width="1.3"/><circle cx="5" cy="5" r="1.6" fill="none" stroke="#2ab0c0" stroke-width="0.8"/></svg>
<svg style="left:224.9px;top:91.0px;" width="9" height="9" viewBox="0 0 9 9"><path d="M1 8L7 1" stroke="#2ab0c0" stroke-width="1.5"/><path d="M0.5 8.5L3 6" stroke="#ddd" stroke-width="1.3"/><circle cx="5" cy="5" r="1.6" fill="none" stroke="#2ab0c0" stroke-width="0.8"/></svg>
<svg style="left:233.7px;top:91.0px;" width="9" height="9" viewBox="0 0 9 9"><path d="M1 8L7 1" stroke="#2ab0c0" stroke-width="1.5"/><path d="M0.5 8.5L3 6" stroke="#ddd" stroke-width="1.3"/><circle cx="5" cy="5" r="1.6" fill="none" stroke="#2ab0c0" stroke-width="0.8"/></svg>
<div class="sp" style="left:247.9px;top:91.5px;height:8px;background:#888"></div>
<div class="a" style="left:250.3px;top:90.0px;width:11px;height:11px;background:#5285a6;"></div>
<svg style="left:251.8px;top:92.0px;" width="8" height="7" viewBox="0 0 8 7"><rect x="0.5" y="0.5" width="7" height="6" fill="#c0a080" stroke="#ddd" stroke-width="0.8"/><path d="M0.5 3.5H7.5" stroke="#ddd" stroke-width="0.6"/></svg>
<svg style="left:261.0px;top:92.0px;" width="9" height="7" viewBox="0 0 9 7"><rect x="0.5" y="0.5" width="8" height="6" fill="none" stroke="#ddd" stroke-width="1"/><rect x="1.5" y="1.8" width="6" height="3.5" fill="#333"/></svg>
<svg style="left:271.1px;top:92.0px;" width="8" height="7" viewBox="0 0 8 7"><rect x="0.5" y="0.5" width="7" height="6" fill="none" stroke="#ddd" stroke-width="1"/><rect x="2.5" y="2" width="3" height="3" fill="#2ab0c0"/></svg>
<svg style="left:280.8px;top:92.0px;" width="8" height="7" viewBox="0 0 8 7"><rect x="0.5" y="0.5" width="7" height="6" fill="none" stroke="#555" stroke-width="1"/></svg>
<svg style="left:291.3px;top:92.0px;" width="8" height="7" viewBox="0 0 8 7"><rect x="0.5" y="0.5" width="7" height="6" fill="none" stroke="#ddd" stroke-width="1"/><path d="M4 0.5V6.5M0.5 3.5H7.5" stroke="#ddd" stroke-width="0.8"/><rect x="1.5" y="1.5" width="2" height="1.5" fill="#2ab0c0"/></svg>
<svg style="left:301.9px;top:92.0px;" width="8" height="7" viewBox="0 0 8 7"><rect x="0.5" y="0.5" width="7" height="6" fill="none" stroke="#ddd" stroke-width="1"/><path d="M1.5 5.5L6.5 1.5" stroke="#2ab0c0" stroke-width="1.5"/></svg>
<svg style="left:312.4px;top:92.0px;" width="8" height="7" viewBox="0 0 8 7"><rect x="0.5" y="0.5" width="7" height="6" fill="none" stroke="#ddd" stroke-width="1"/><rect x="2" y="2" width="4" height="3.5" fill="#2ab0c0"/><path d="M4 1V6" stroke="#ddd" stroke-width="0.8"/></svg>
<div class="sp" style="left:324.4px;top:91.5px;height:8px;background:#888"></div>
<svg style="left:327.7px;top:91.0px;" width="9" height="9" viewBox="0 0 9 9"><path d="M4.5 0.5L8.5 2.5V6.5L4.5 8.5L0.5 6.5V2.5Z M0.5 2.5L4.5 4.5L8.5 2.5 M4.5 4.5V8.5" stroke="#ccc" stroke-width="0.8" fill="none"/></svg>
<div class="a" style="left:337.2px;top:90.0px;width:11px;height:11px;background:#5285a6;"></div>
<svg style="left:338.2px;top:91.0px;" width="9" height="9" viewBox="0 0 9 9"><path d="M4.5 0.5L8.5 2.5V6.5L4.5 8.5L0.5 6.5V2.5Z" fill="#2ab0c0" stroke="#ddd" stroke-width="0.7"/></svg>
<svg style="left:348.5px;top:91.5px;" width="8" height="8" viewBox="0 0 8 8"><circle cx="4" cy="4" r="3.5" fill="#ddd"/><path d="M4 0.5A3.5 3.5 0 0 0 4 7.5Z" fill="#333"/></svg>
<svg style="left:359.2px;top:91.5px;" width="8" height="8" viewBox="0 0 8 8"><rect x="0.5" y="0.5" width="7" height="7" fill="#3a9aa8" stroke="#aaa" stroke-width="0.6"/><path d="M0.5 4H7.5M4 0.5V7.5" stroke="#ccc" stroke-width="0.6"/></svg>
<svg style="left:369.0px;top:91.5px;" width="8" height="8" viewBox="0 0 8 8"><circle cx="4" cy="4" r="3.5" fill="#888" stroke="#ccc" stroke-width="0.6" stroke-dasharray="1 0.6"/></svg>
<svg style="left:379.7px;top:91.0px;" width="6" height="9" viewBox="0 0 6 9"><circle cx="3" cy="3" r="2.2" fill="#eee"/><path d="M3 5V8.5M0.5 1L1.5 2M5.5 1L4.5 2" stroke="#ddd" stroke-width="0.8"/></svg>
<svg style="left:388.5px;top:92.0px;" width="10" height="7" viewBox="0 0 10 7"><ellipse cx="6" cy="3.5" rx="3.5" ry="3.2" fill="#2ab0c0"/><path d="M0 5.5H4" stroke="#bbb" stroke-width="0.8"/></svg>
<div class="sp" style="left:401.3px;top:91.5px;height:8px;background:#888"></div>
<svg style="left:405.1px;top:91.0px;" width="8" height="9" viewBox="0 0 8 9"><circle cx="4" cy="3" r="3" fill="#eee"/><rect x="1" y="5" width="6" height="3.5" fill="#2ab0c0"/></svg>
<svg style="left:415.3px;top:91.0px;" width="9" height="9" viewBox="0 0 9 9"><circle cx="5.5" cy="3.5" r="3" fill="#ddd"/><path d="M0.5 8.5L4 5" stroke="#aaa" stroke-width="1.4"/></svg>
<svg style="left:425.1px;top:91.0px;" width="9" height="9" viewBox="0 0 9 9"><path d="M4.5 0.5L8.5 4.5L4.5 8.5L0.5 4.5Z" fill="none" stroke="#2ab0c0" stroke-width="1.5"/><circle cx="4.5" cy="4.5" r="1" fill="#ddd"/></svg>
<svg style="left:434.9px;top:91.0px;" width="9" height="9" viewBox="0 0 9 9"><rect x="1" y="1" width="7" height="7" fill="#2a7070" opacity="0.6"/><path d="M4.5 1V8" stroke="#2a8a8a" stroke-width="1"/></svg>
<div class="sp" style="left:448.2px;top:91.5px;height:8px;background:#888"></div>
<svg style="left:450.5px;top:91.0px;" width="9" height="9" viewBox="0 0 9 9"><rect x="1" y="1" width="5" height="6" fill="#2a6a6a" opacity="0.7"/><path d="M4 3L8 8L6.5 8.2L7 9.5" stroke="#ddd" stroke-width="0.8" fill="#ddd"/></svg>
<div class="sp" style="left:463.8px;top:91.5px;height:8px;background:#888"></div>
<svg style="left:467.1px;top:91.0px;" width="9" height="9" viewBox="0 0 9 9"><rect x="0.5" y="3.5" width="5" height="5" fill="#eee"/><rect x="3.5" y="0.5" width="5" height="5" fill="none" stroke="#eee" stroke-width="1"/></svg>
<svg style="left:476.9px;top:91.0px;" width="9" height="9" viewBox="0 0 9 9"><rect x="0.5" y="3.5" width="5" height="5" fill="#eee"/><path d="M3.5 2V0.5H8.5V5.5H7" stroke="#eee" stroke-width="1" fill="none"/></svg>
<div class="a" style="left:485.6px;top:90.0px;width:11px;height:11px;background:#4a6a80;"></div>
<svg style="left:487.1px;top:91.5px;" width="8" height="8" viewBox="0 0 8 8"><rect x="0.5" y="0.5" width="7" height="7" fill="none" stroke="#ddd" stroke-width="1"/><path d="M1.5 1.5L6.5 6.5" stroke="#ddd" stroke-width="1.2"/></svg>
<div class="sp" style="left:499.9px;top:91.5px;height:8px;background:#888"></div>
<svg style="left:504.2px;top:91.0px;" width="9" height="9" viewBox="0 0 9 9"><path d="M4.5 0.5L8.5 3.5L7 8.5H2L0.5 3.5Z" fill="none" stroke="#ddd" stroke-width="1.3"/></svg>
<div class="a" style="left:514px;top:91.5px;width:3px;height:9px;background:#222;"></div>
<div class="a" style="left:168px;top:100.6px;width:351px;height:381.2px;background:#5c5c5c;"></div>
<div class="a" style="left:520.5px;top:79.5px;width:352.8px;height:403.5px;background:#5a5a5a;"></div>
<div class="a" style="left:521.5px;top:80.5px;width:350.8px;height:401.5px;background:#444;"></div>
<div class="t" style="left:526px;top:81.8px;color:#cfcfcf">View</div>
<div class="t" style="left:547px;top:81.8px;color:#cfcfcf">Shading</div>
<div class="t" style="left:578px;top:81.8px;color:#cfcfcf">Lighting</div>
<div class="t" style="left:609.5px;top:81.8px;color:#cfcfcf">Show</div>
<div class="t" style="left:632.5px;top:81.8px;color:#cfcfcf">Renderer</div>
<div class="t" style="left:665px;top:81.8px;color:#cfcfcf">Panels</div>
<div class="sp" style="left:525.0px;top:91.5px;height:8px;background:#888"></div>
<svg style="left:528.1px;top:93.0px;" width="8" height="5" viewBox="0 0 8 5"><rect x="0" y="0.5" width="5" height="4" fill="#ddd"/><path d="M5 2.5L8 0.5V4.5Z" fill="#ddd"/></svg>
<svg style="left:537.2px;top:92.0px;" width="9" height="7" viewBox="0 0 9 7"><rect x="0" y="1.5" width="5" height="5" fill="#2ab0c0"/><rect x="0" y="0" width="5" height="1.5" fill="#ddd"/><path d="M5 3.5L8.5 1.5V5.5Z" fill="#ddd"/></svg>
<svg style="left:547.8px;top:92.0px;" width="9" height="7" viewBox="0 0 9 7"><rect x="0" y="1.5" width="5" height="5" fill="#2ab0c0"/><circle cx="2.5" cy="4" r="1.2" fill="#333"/><rect x="0" y="0" width="5" height="1.5" fill="#ddd"/><path d="M5 3.5L8.5 1.5V5.5Z" fill="#ddd"/></svg>
<svg style="left:561.7px;top:92.0px;" width="4" height="7" viewBox="0 0 4 7"><rect x="0" y="0" width="3" height="6.5" fill="#ddd"/></svg>
<svg style="left:568.9px;top:91.0px;" width="9" height="9" viewBox="0 0 9 9"><path d="M1 8L7 1" stroke="#2ab0c0" stroke-width="1.5"/><path d="M0.5 8.5L3 6" stroke="#ddd" stroke-width="1.3"/><circle cx="5" cy="5" r="1.6" fill="none" stroke="#2ab0c0" stroke-width="0.8"/></svg>
<svg style="left:579.4px;top:91.0px;" width="9" height="9" viewBox="0 0 9 9"><path d="M1 8L7 1" stroke="#2ab0c0" stroke-width="1.5"/><path d="M0.5 8.5L3 6" stroke="#ddd" stroke-width="1.3"/><circle cx="5" cy="5" r="1.6" fill="none" stroke="#2ab0c0" stroke-width="0.8"/></svg>
<svg style="left:588.2px;top:91.0px;" width="9" height="9" viewBox="0 0 9 9"><path d="M1 8L7 1" stroke="#2ab0c0" stroke-width="1.5"/><path d="M0.5 8.5L3 6" stroke="#ddd" stroke-width="1.3"/><circle cx="5" cy="5" r="1.6" fill="none" stroke="#2ab0c0" stroke-width="0.8"/></svg>
<div class="sp" style="left:602.4px;top:91.5px;height:8px;background:#888"></div>
<div class="a" style="left:604.8px;top:90.0px;width:11px;height:11px;background:#5285a6;"></div>
<svg style="left:606.3px;top:92.0px;" width="8" height="7" viewBox="0 0 8 7"><rect x="0.5" y="0.5" width="7" height="6" fill="#c0a080" stroke="#ddd" stroke-width="0.8"/><path d="M0.5 3.5H7.5" stroke="#ddd" stroke-width="0.6"/></svg>
<svg style="left:615.5px;top:92.0px;" width="9" height="7" viewBox="0 0 9 7"><rect x="0.5" y="0.5" width="8" height="6" fill="none" stroke="#ddd" stroke-width="1"/><rect x="1.5" y="1.8" width="6" height="3.5" fill="#333"/></svg>
<svg style="left:625.6px;top:92.0px;" width="8" height="7" viewBox="0 0 8 7"><rect x="0.5" y="0.5" width="7" height="6" fill="none" stroke="#ddd" stroke-width="1"/><rect x="2.5" y="2" width="3" height="3" fill="#2ab0c0"/></svg>
<svg style="left:635.3px;top:92.0px;" width="8" height="7" viewBox="0 0 8 7"><rect x="0.5" y="0.5" width="7" height="6" fill="none" stroke="#555" stroke-width="1"/></svg>
<svg style="left:645.8px;top:92.0px;" width="8" height="7" viewBox="0 0 8 7"><rect x="0.5" y="0.5" width="7" height="6" fill="none" stroke="#ddd" stroke-width="1"/><path d="M4 0.5V6.5M0.5 3.5H7.5" stroke="#ddd" stroke-width="0.8"/><rect x="1.5" y="1.5" width="2" height="1.5" fill="#2ab0c0"/></svg>
<svg style="left:656.4px;top:92.0px;" width="8" height="7" viewBox="0 0 8 7"><rect x="0.5" y="0.5" width="7" height="6" fill="none" stroke="#ddd" stroke-width="1"/><path d="M1.5 5.5L6.5 1.5" stroke="#2ab0c0" stroke-width="1.5"/></svg>
<svg style="left:666.9px;top:92.0px;" width="8" height="7" viewBox="0 0 8 7"><rect x="0.5" y="0.5" width="7" height="6" fill="none" stroke="#ddd" stroke-width="1"/><rect x="2" y="2" width="4" height="3.5" fill="#2ab0c0"/><path d="M4 1V6" stroke="#ddd" stroke-width="0.8"/></svg>
<div class="sp" style="left:678.9px;top:91.5px;height:8px;background:#888"></div>
<svg style="left:682.2px;top:91.0px;" width="9" height="9" viewBox="0 0 9 9"><path d="M4.5 0.5L8.5 2.5V6.5L4.5 8.5L0.5 6.5V2.5Z M0.5 2.5L4.5 4.5L8.5 2.5 M4.5 4.5V8.5" stroke="#ccc" stroke-width="0.8" fill="none"/></svg>
<div class="a" style="left:691.7px;top:90.0px;width:11px;height:11px;background:#5285a6;"></div>
<svg style="left:692.7px;top:91.0px;" width="9" height="9" viewBox="0 0 9 9"><path d="M4.5 0.5L8.5 2.5V6.5L4.5 8.5L0.5 6.5V2.5Z" fill="#2ab0c0" stroke="#ddd" stroke-width="0.7"/></svg>
<svg style="left:703.0px;top:91.5px;" width="8" height="8" viewBox="0 0 8 8"><circle cx="4" cy="4" r="3.5" fill="#ddd"/><path d="M4 0.5A3.5 3.5 0 0 0 4 7.5Z" fill="#333"/></svg>
<div class="a" style="left:712.2px;top:90.0px;width:11px;height:11px;background:#5285a6;"></div>
<div class="a" style="left:722.0px;top:90.0px;width:11px;height:11px;background:#5285a6;"></div>
<svg style="left:713.7px;top:91.5px;" width="8" height="8" viewBox="0 0 8 8"><rect x="0.5" y="0.5" width="7" height="7" fill="#3a9aa8" stroke="#aaa" stroke-width="0.6"/><path d="M0.5 4H7.5M4 0.5V7.5" stroke="#ccc" stroke-width="0.6"/></svg>
<svg style="left:723.5px;top:91.5px;" width="8" height="8" viewBox="0 0 8 8"><circle cx="4" cy="4" r="3.5" fill="#888" stroke="#ccc" stroke-width="0.6" stroke-dasharray="1 0.6"/></svg>
<svg style="left:734.2px;top:91.0px;" width="6" height="9" viewBox="0 0 6 9"><circle cx="3" cy="3" r="2.2" fill="#eee"/><path d="M3 5V8.5M0.5 1L1.5 2M5.5 1L4.5 2" stroke="#ddd" stroke-width="0.8"/></svg>
<svg style="left:743.0px;top:92.0px;" width="10" height="7" viewBox="0 0 10 7"><ellipse cx="6" cy="3.5" rx="3.5" ry="3.2" fill="#2ab0c0"/><path d="M0 5.5H4" stroke="#bbb" stroke-width="0.8"/></svg>
<div class="sp" style="left:755.8px;top:91.5px;height:8px;background:#888"></div>
<svg style="left:759.6px;top:91.0px;" width="8" height="9" viewBox="0 0 8 9"><circle cx="4" cy="3" r="3" fill="#eee"/><rect x="1" y="5" width="6" height="3.5" fill="#2ab0c0"/></svg>
<svg style="left:769.8px;top:91.0px;" width="9" height="9" viewBox="0 0 9 9"><circle cx="5.5" cy="3.5" r="3" fill="#ddd"/><path d="M0.5 8.5L4 5" stroke="#aaa" stroke-width="1.4"/></svg>
<svg style="left:779.6px;top:91.0px;" width="9" height="9" viewBox="0 0 9 9"><path d="M4.5 0.5L8.5 4.5L4.5 8.5L0.5 4.5Z" fill="none" stroke="#2ab0c0" stroke-width="1.5"/><circle cx="4.5" cy="4.5" r="1" fill="#ddd"/></svg>
<svg style="left:789.4px;top:91.0px;" width="9" height="9" viewBox="0 0 9 9"><rect x="1" y="1" width="7" height="7" fill="#2a7070" opacity="0.6"/><path d="M4.5 1V8" stroke="#2a8a8a" stroke-width="1"/></svg>
<div class="sp" style="left:802.7px;top:91.5px;height:8px;background:#888"></div>
<svg style="left:805.0px;top:91.0px;" width="9" height="9" viewBox="0 0 9 9"><rect x="1" y="1" width="5" height="6" fill="#2a6a6a" opacity="0.7"/><path d="M4 3L8 8L6.5 8.2L7 9.5" stroke="#ddd" stroke-width="0.8" fill="#ddd"/></svg>
<div class="sp" style="left:818.3px;top:91.5px;height:8px;background:#888"></div>
<svg style="left:821.6px;top:91.0px;" width="9" height="9" viewBox="0 0 9 9"><rect x="0.5" y="3.5" width="5" height="5" fill="#eee"/><rect x="3.5" y="0.5" width="5" height="5" fill="none" stroke="#eee" stroke-width="1"/></svg>
<svg style="left:831.4px;top:91.0px;" width="9" height="9" viewBox="0 0 9 9"><rect x="0.5" y="3.5" width="5" height="5" fill="#eee"/><path d="M3.5 2V0.5H8.5V5.5H7" stroke="#eee" stroke-width="1" fill="none"/></svg>
<div class="a" style="left:840.1px;top:90.0px;width:11px;height:11px;background:#4a6a80;"></div>
<svg style="left:841.6px;top:91.5px;" width="8" height="8" viewBox="0 0 8 8"><rect x="0.5" y="0.5" width="7" height="7" fill="none" stroke="#ddd" stroke-width="1"/><path d="M1.5 1.5L6.5 6.5" stroke="#ddd" stroke-width="1.2"/></svg>
<div class="sp" style="left:854.4px;top:91.5px;height:8px;background:#888"></div>
<svg style="left:858.7px;top:91.0px;" width="9" height="9" viewBox="0 0 9 9"><path d="M4.5 0.5L8.5 3.5L7 8.5H2L0.5 3.5Z" fill="none" stroke="#ddd" stroke-width="1.3"/></svg>
<div class="a" style="left:868.5px;top:91.5px;width:3px;height:9px;background:#222;"></div>
<div class="a" style="left:522px;top:101px;width:350.5px;height:381px;background:#5c5c5c;"></div>
<div class="a" style="left:166px;top:78px;width:1.5px;height:406px;background:#333;"></div>
<div class="a" style="left:519px;top:78px;width:1.5px;height:406px;background:#363636;"></div>
<div class="a" style="left:873.3px;top:78px;width:1.8px;height:406px;background:#393939;"></div>
<div class="a" style="left:190.3px;top:100.6px;width:1px;height:381.2px;background:#4d4d4d;"></div>
<div class="a" style="left:290.7px;top:100.6px;width:1px;height:381.2px;background:#4d4d4d;"></div>
<div class="a" style="left:391.2px;top:100.6px;width:1px;height:381.2px;background:#4d4d4d;"></div>
<div class="a" style="left:491.6px;top:100.6px;width:1px;height:381.2px;background:#4d4d4d;"></div>
<div class="a" style="left:168px;top:151.9px;width:351px;height:1px;background:#4d4d4d;"></div>
<div class="a" style="left:168px;top:252.6px;width:351px;height:1px;background:#4d4d4d;"></div>
<div class="a" style="left:168px;top:352.9px;width:351px;height:1px;background:#4d4d4d;"></div>
<div class="a" style="left:168px;top:453.2px;width:351px;height:1px;background:#4d4d4d;"></div>
<div class="a" style="left:522px;top:101px;width:350.5px;height:381px;overflow:hidden">
<svg style="left:-522px;top:-101px" width="1024" height="554"><defs><clipPath id="pbody"><path d="M573 239.4H589V233H588V216Q588 194 616 194Q645 194 645 216V233H647V299H598.4V291.2H573Z"/></clipPath></defs><g stroke="#4c4c4c" stroke-width="1" fill="none"><line x1="522" y1="396.91" x2="873" y2="396.91"/><line x1="522" y1="356.31" x2="873" y2="356.31"/><line x1="522" y1="334.55" x2="873" y2="334.55"/><line x1="522" y1="320.98" x2="873" y2="320.98"/><line x1="522" y1="311.71" x2="873" y2="311.71"/><line x1="522" y1="304.98" x2="873" y2="304.98"/><line x1="522" y1="299.87" x2="873" y2="299.87"/><line x1="522" y1="295.86" x2="873" y2="295.86"/><line x1="522" y1="292.62" x2="873" y2="292.62"/><line x1="522" y1="289.96" x2="873" y2="289.96"/><line x1="522" y1="287.73" x2="873" y2="287.73"/><line x1="522" y1="285.83" x2="873" y2="285.83"/><line x1="-357.94" y1="285.83" x2="-9236.03" y2="482"/><line x1="-331.21" y1="285.83" x2="-8984.53" y2="482"/><line x1="-304.47" y1="285.83" x2="-8733.04" y2="482"/><line x1="-277.74" y1="285.83" x2="-8481.54" y2="482"/><line x1="-251.01" y1="285.83" x2="-8230.05" y2="482"/><line x1="-224.28" y1="285.83" x2="-7978.55" y2="482"/><line x1="-197.54" y1="285.83" x2="-7727.06" y2="482"/><line x1="-170.81" y1="285.83" x2="-7475.57" y2="482"/><line x1="-144.08" y1="285.83" x2="-7224.07" y2="482"/><line x1="-117.34" y1="285.83" x2="-6972.58" y2="482"/><line x1="-90.61" y1="285.83" x2="-6721.08" y2="482"/><line x1="-63.88" y1="285.83" x2="-6469.59" y2="482"/><line x1="-37.15" y1="285.83" x2="-6218.09" y2="482"/><line x1="-10.41" y1="285.83" x2="-5966.60" y2="482"/><line x1="16.32" y1="285.83" x2="-5715.11" y2="482"/><line x1="43.05" y1="285.83" x2="-5463.61" y2="482"/><line x1="69.78" y1="285.83" x2="-5212.12" y2="482"/><line x1="96.52" y1="285.83" x2="-4960.62" y2="482"/><line x1="123.25" y1="285.83" x2="-4709.13" y2="482"/><line x1="149.98" y1="285.83" x2="-4457.63" y2="482"/><line x1="176.71" y1="285.83" x2="-4206.14" y2="482"/><line x1="203.45" y1="285.83" x2="-3954.64" y2="482"/><line x1="230.18" y1="285.83" x2="-3703.15" y2="482"/><line x1="256.91" y1="285.83" x2="-3451.66" y2="482"/><line x1="283.64" y1="285.83" x2="-3200.16" y2="482"/><line x1="310.38" y1="285.83" x2="-2948.67" y2="482"/><line x1="337.11" y1="285.83" x2="-2697.17" y2="482"/><line x1="363.84" y1="285.83" x2="-2445.68" y2="482"/><line x1="390.57" y1="285.83" x2="-2194.18" y2="482"/><line x1="417.31" y1="285.83" x2="-1942.69" y2="482"/><line x1="444.04" y1="285.83" x2="-1691.20" y2="482"/><line x1="470.77" y1="285.83" x2="-1439.70" y2="482"/><line x1="497.51" y1="285.83" x2="-1188.21" y2="482"/><line x1="524.24" y1="285.83" x2="-936.71" y2="482"/><line x1="550.97" y1="285.83" x2="-685.22" y2="482"/><line x1="577.70" y1="285.83" x2="-433.72" y2="482"/><line x1="604.44" y1="285.83" x2="-182.23" y2="482"/><line x1="631.17" y1="285.83" x2="69.26" y2="482"/><line x1="657.90" y1="285.83" x2="320.76" y2="482"/><line x1="684.63" y1="285.83" x2="572.25" y2="482"/><line x1="711.37" y1="285.83" x2="823.75" y2="482"/><line x1="738.10" y1="285.83" x2="1075.24" y2="482"/><line x1="764.83" y1="285.83" x2="1326.74" y2="482"/><line x1="791.56" y1="285.83" x2="1578.23" y2="482"/><line x1="818.30" y1="285.83" x2="1829.72" y2="482"/><line x1="845.03" y1="285.83" x2="2081.22" y2="482"/><line x1="871.76" y1="285.83" x2="2332.71" y2="482"/><line x1="898.49" y1="285.83" x2="2584.21" y2="482"/><line x1="925.23" y1="285.83" x2="2835.70" y2="482"/><line x1="951.96" y1="285.83" x2="3087.20" y2="482"/><line x1="978.69" y1="285.83" x2="3338.69" y2="482"/><line x1="1005.43" y1="285.83" x2="3590.18" y2="482"/><line x1="1032.16" y1="285.83" x2="3841.68" y2="482"/><line x1="1058.89" y1="285.83" x2="4093.17" y2="482"/><line x1="1085.62" y1="285.83" x2="4344.67" y2="482"/><line x1="1112.36" y1="285.83" x2="4596.16" y2="482"/><line x1="1139.09" y1="285.83" x2="4847.66" y2="482"/><line x1="1165.82" y1="285.83" x2="5099.15" y2="482"/><line x1="1192.55" y1="285.83" x2="5350.64" y2="482"/><line x1="1219.29" y1="285.83" x2="5602.14" y2="482"/><line x1="1246.02" y1="285.83" x2="5853.63" y2="482"/><line x1="1272.75" y1="285.83" x2="6105.13" y2="482"/><line x1="1299.48" y1="285.83" x2="6356.62" y2="482"/><line x1="1326.22" y1="285.83" x2="6608.12" y2="482"/><line x1="1352.95" y1="285.83" x2="6859.61" y2="482"/><line x1="1379.68" y1="285.83" x2="7111.11" y2="482"/><line x1="1406.41" y1="285.83" x2="7362.60" y2="482"/><line x1="1433.15" y1="285.83" x2="7614.09" y2="482"/><line x1="1459.88" y1="285.83" x2="7865.59" y2="482"/><line x1="1486.61" y1="285.83" x2="8117.08" y2="482"/><line x1="1513.34" y1="285.83" x2="8368.58" y2="482"/><line x1="1540.08" y1="285.83" x2="8620.07" y2="482"/><line x1="1566.81" y1="285.83" x2="8871.57" y2="482"/><line x1="1593.54" y1="285.83" x2="9123.06" y2="482"/><line x1="1620.28" y1="285.83" x2="9374.55" y2="482"/><line x1="1647.01" y1="285.83" x2="9626.05" y2="482"/><line x1="1673.74" y1="285.83" x2="9877.54" y2="482"/><line x1="1700.47" y1="285.83" x2="10129.04" y2="482"/><line x1="1727.21" y1="285.83" x2="10380.53" y2="482"/><line x1="1753.94" y1="285.83" x2="10632.03" y2="482"/></g><path d="M532 130L586 235M645 310L710 350" stroke="#a0603a" stroke-width="0.6" opacity="0.6"/><path d="M528.8 125.7Q545 137 558.6 150Q572 168 583 189.4Q587 198 588.4 208.4Q590 222 589.8 236" stroke="#e020e0" stroke-width="4.2" fill="none" opacity="0.75"/><path d="M528.8 125.7Q545 137 558.6 150Q572 168 583 189.4Q587 198 588.4 208.4Q590 222 589.8 236" stroke="#2a2230" stroke-width="2.2" fill="none"/><ellipse cx="558" cy="151" rx="9" ry="4.5" transform="rotate(42 558 151)" stroke="#e020e0" stroke-width="0.9" fill="none"/><ellipse cx="584" cy="191" rx="9" ry="4.5" transform="rotate(62 584 191)" stroke="#e020e0" stroke-width="0.9" fill="none"/><circle cx="527" cy="121.7" r="4.8" fill="#1a2a44" stroke="#e020e0" stroke-width="1.3"/><path d="M525 120L529 123M529 120L525 123" stroke="#5a7aa0" stroke-width="0.8"/><text x="636" y="146" font-family="Liberation Serif" font-size="8" fill="#302060">FK</text><rect x="573" y="239.4" width="25.4" height="52" rx="2" fill="#e6a21a"/><circle cx="573.5" cy="255" r="2.8" fill="#e020e0"/><circle cx="573.5" cy="275" r="2.8" fill="#e020e0"/><rect x="589" y="233" width="58" height="66" fill="#e6a21a"/><rect x="593" y="236" width="34" height="50" fill="#f6d6a6"/><rect x="627" y="236" width="14" height="60" fill="#f2c040"/><rect x="646" y="243" width="7" height="42" fill="#c8c8d0"/><path d="M588 235V216Q588 194 616 194Q645 194 645 216V235Z" fill="#e6a21a" stroke="#e020e0" stroke-width="1"/><path d="M606 235V196Q616 193 630 197V235Z" fill="#f2c040"/><circle cx="644" cy="213" r="7" fill="#5a4a6a" stroke="#e020e0" stroke-width="1.6"/><path d="M606 304.7H636Q645.3 312 645.3 330Q645.3 348 637 355.4H606Q596.8 348 596.8 330Q596.8 312 606 304.7Z" fill="#dc9c18" stroke="#3a2a10" stroke-width="0.6"/><path d="M604 306H616V354H604Q598 346 598 330Q598 314 604 306Z" fill="#eab030"/><rect x="609.2" y="355" width="23.7" height="36" fill="#2a2230"/><path d="M624 389L627 377Q632 374 645 373.5Q654 376 656.6 385V389Z" fill="#e8b860" stroke="#3a2a10" stroke-width="0.9"/><path d="M606 407.3L609 392Q612 388 625 387.5L640 387Q650 390 652 400V407.3Z" fill="#e8b860" stroke="#3a2a10" stroke-width="0.9"/><path d="M608 398H650M618 389V407M630 388V407M640 387V407M630 380H654M640 375V389" stroke="#6a4a10" stroke-width="0.6"/><g clip-path="url(#pbody)"><path d="M572 200H653M572 207H653M572 214H653M572 221H653M572 228H653M572 235H653M572 242H653M572 249H653M572 256H653M572 263H653M572 270H653M572 277H653M572 284H653M572 291H653M572 298H653M575 196V300M582 196V300M589 196V300M596 196V300M603 196V300M610 196V300M617 196V300M624 196V300M631 196V300M638 196V300M645 196V300M652 196V300" stroke="#c818c8" stroke-width="0.7" opacity="0.55"/></g><path d="M596 308H646M596 314H646M596 320H646M596 326H646M596 332H646M596 338H646M596 344H646M596 350H646M600 304V356M608 304V356M616 304V356M624 304V356M632 304V356M640 304V356" stroke="#3a2a10" stroke-width="0.6" opacity="0.8"/><path d="M616 196V230M610 245L618 262L624 300L616 340L620 395M600 248L626 240" stroke="#e020e0" stroke-width="0.9" fill="none" opacity="0.8"/><path d="M612 305L620 350L628 305M614 355V390M628 355V385M610 360L630 375M612 380L628 365" stroke="#e020e0" stroke-width="0.8" fill="none" opacity="0.85"/><ellipse cx="620" cy="300" rx="12" ry="3" fill="none" stroke="#e020e0" stroke-width="1.2"/><ellipse cx="620" cy="392" rx="9" ry="2.5" fill="none" stroke="#e020e0" stroke-width="1"/><rect x="610" y="357" width="14" height="5" fill="#d8a040"/><path d="M642 308Q666 330 692 346" stroke="#2a1f33" stroke-width="8.5" fill="none"/><path d="M645 311Q668 333 693 349" stroke="#e020e0" stroke-width="5" fill="none" stroke-dasharray="2.2 1"/><path d="M645 311Q668 333 693 349" stroke="#3a1a44" stroke-width="1.5" fill="none" opacity="0.7"/><path d="M693.6 337.6L716.4 349.5L709.4 363.4L689.6 351.5Z" fill="#e6a21a" stroke="#6a4a10" stroke-width="0.6"/><path d="M698 347L727.3 376.3" stroke="#2a1f33" stroke-width="8.5" stroke-linecap="round"/><path d="M698 347L727.3 376.3" stroke="#e020e0" stroke-width="7" stroke-linecap="round"/><path d="M699 348L726 375" stroke="#3a1a44" stroke-width="3" stroke-dasharray="1.6 1.3" opacity="0.7"/><path d="M606 247C612 262 628 272 645 274C662 277 690 276 705 266C718 256 723 240 722 223C721 212 718 204 713 197" stroke="#2a1f33" stroke-width="12" fill="none"/><path d="M606 247C612 262 628 272 645 274C662 277 690 276 705 266C718 256 723 240 722 223C721 212 718 204 713 197" stroke="#c81ccc" stroke-width="10.5" fill="none" stroke-dasharray="2.2 1"/><path d="M606 247C612 262 628 272 645 274C662 277 690 276 705 266C718 256 723 240 722 223C721 212 718 204 713 197" stroke="#3a1a44" stroke-width="3.5" fill="none" opacity="0.85"/><path d="M606 247C612 262 628 272 645 274C662 277 690 276 705 266C718 256 723 240 722 223C721 212 718 204 713 197" stroke="#e020e0" stroke-width="0.7" fill="none"/><path d="M606 247C612 262 628 272 645 274C662 277 690 276 705 266C718 256 723 240 722 223C721 212 718 204 713 197" stroke="#e020e0" stroke-width="0.8" fill="none"/><circle cx="610" cy="244" r="10.5" fill="#e0a020" stroke="#e020e0" stroke-width="1.5"/><path d="M600 244H620M610 234V254M602 238L618 250M602 250L618 238" stroke="#e020e0" stroke-width="0.7"/><path d="M630 240L685 205" stroke="#60d0a0" stroke-width="0.9"/><path d="M639 147Q632 160 632 180L633 238Q633 256 623 268" stroke="#2a1a50" stroke-width="1.4" fill="none"/><ellipse cx="700" cy="187" rx="20" ry="13" transform="rotate(20 700 187)" fill="#e6a21a"/><ellipse cx="700" cy="187" rx="20" ry="13" transform="rotate(20 700 187)" fill="none" stroke="#e020e0" stroke-width="1.2"/><path d="M684 178H716M682 185H720M684 192H719M688 198H712M692 174V200M700 174V202M708 176V201M714 180V198" stroke="#e020e0" stroke-width="0.9" opacity="0.85"/><path d="M685 196Q700 204 714 196" stroke="#e020e0" stroke-width="4" fill="none" opacity="0.8"/><path d="M664 176L688 184M674 170L693 177" stroke="#e020e0" stroke-width="7.5" stroke-linecap="round"/><path d="M678 206.7L696.7 194.8" stroke="#e020e0" stroke-width="9" stroke-linecap="round"/><path d="M664 176L688 184M674 170L693 177M678 206.7L696.7 194.8" stroke="#3a1a44" stroke-width="2.6" stroke-dasharray="1.6 1.4" opacity="0.75"/><path d="M706 190V138" stroke="#20e020" stroke-width="1.3"/><path d="M706 128.5L702.5 139H709.5Z" fill="#20e020"/><path d="M711 190H751" stroke="#e0e020" stroke-width="1.3"/><path d="M760 190L751 186.5V193.5Z" fill="#e0e020"/><rect x="699" y="184.8" width="11.6" height="11" fill="none" stroke="#60c8e0" stroke-width="0.9"/><path d="M706 187V193M703 190H709" stroke="#60c8e0" stroke-width="0.8"/><rect x="737" y="149" width="10" height="9" fill="#4a4ab8" stroke="#6a6ad8" stroke-width="0.6"/><path d="M535.8 467V456.5" stroke="#20d020" stroke-width="1.2"/><path d="M535.8 467H545" stroke="#e02020" stroke-width="1.2"/><circle cx="535.8" cy="466.5" r="1" fill="#2040e0"/></svg>
</div>
<div class="a" style="left:168px;top:100.6px;width:351px;height:381.2px;overflow:hidden">
<svg style="left:-168px;top:-100.6px" width="1024" height="554"><path d="M232 180L268 250M300 300L345 340" stroke="#a0603a" stroke-width="0.6" opacity="0.6"/><path d="M228 172Q247 183 256 200Q265 214 267 230Q268 240 268 250" stroke="#e020e0" stroke-width="4.2" fill="none"/><path d="M228 172Q247 183 256 200Q265 214 267 230Q268 240 268 250" stroke="#2a2230" stroke-width="1.8" fill="none"/><path d="M242 181L252 182L256 194L247 194Z M261 208L268 208L272 222L264 224Z" stroke="#e020e0" stroke-width="1.1" fill="none"/><circle cx="228.1" cy="171.7" r="3.8" fill="#1a2a44" stroke="#e020e0" stroke-width="1.2"/><rect x="263" y="249" width="47" height="32" fill="#e6a21a"/><rect x="263" y="251" width="13" height="29" rx="2" fill="#c88a12"/><rect x="261.5" y="258" width="3" height="16" rx="1.5" fill="#6a7a90"/><rect x="276" y="250" width="10" height="31" fill="#f6d6a6"/><rect x="296" y="250" width="10" height="31" fill="#d8920e"/><rect x="305.5" y="252" width="5.5" height="28" fill="#c4c4cc"/><path d="M273 250V236Q273 222 290 222Q306.5 222 306.5 236V250Z" fill="#e6a21a"/><path d="M279 250V230Q283 224 291 223V250Z" fill="#f2c040"/><path d="M298 250V226Q304 229 306.5 236V250Z" fill="#d08c10"/><circle cx="307.5" cy="235" r="4" fill="#4a5a72"/><rect x="277.5" y="280" width="27.5" height="12.5" fill="#e6a21a"/><rect x="277.5" y="280" width="13" height="12.5" fill="#f6d6a6"/><rect x="278.3" y="292" width="25.5" height="26.5" rx="5" fill="#e6a21a"/><rect x="281" y="293" width="9" height="24" fill="#f2c040"/><rect x="286.6" y="318" width="10" height="23" fill="#2a2230"/><path d="M284 352.4L287 344.6H305L310.2 352.4Z" fill="#f6d6a6"/><path d="M290 222V345M284 258L290 250L296 258L290 300L284 258M286 300L290 292L294 300L290 338Z" stroke="#e020e0" stroke-width="0.9" fill="none"/><path d="M276 258H300M266 256L290 262" stroke="#e020e0" stroke-width="1.3" fill="none"/><circle cx="290" cy="224" r="2" fill="none" stroke="#e020e0" stroke-width="1.1"/><circle cx="290" cy="250" r="2.5" fill="none" stroke="#e020e0" stroke-width="1.1"/><circle cx="288" cy="262" r="3.5" fill="none" stroke="#e020e0" stroke-width="1.1"/><circle cx="290" cy="292" r="2.5" fill="none" stroke="#e020e0" stroke-width="1.1"/><circle cx="290" cy="320" r="2" fill="none" stroke="#e020e0" stroke-width="1.1"/><circle cx="291" cy="343" r="3.2" fill="none" stroke="#e020e0" stroke-width="1.1"/><circle cx="270" cy="258" r="3" fill="none" stroke="#e020e0" stroke-width="1.1"/><path d="M302 309.5Q318 321 336 332" stroke="#2a1f33" stroke-width="5.8" fill="none"/><path d="M302.5 311Q318.5 322.5 336 333.5" stroke="#e020e0" stroke-width="3.4" fill="none" stroke-dasharray="1.6 1"/><path d="M333 325.3L348 327.9L355.7 335.5L346.8 348L334.2 337.4Z" fill="#dca020" stroke="#7a5a10" stroke-width="0.5"/><path d="M340 330L350 333L352 340" stroke="#f4d070" stroke-width="2" fill="none" opacity="0.8"/><circle cx="345" cy="329" r="3" fill="#e020e0"/><path d="M346 334L364.5 360.7" stroke="#e020e0" stroke-width="5.5"/><path d="M346 334L364.5 360.7" stroke="#3a1a44" stroke-width="2.2" stroke-dasharray="1.5 1.2" opacity="0.7"/><path d="M294 258C310 276 340 282 352 258C360 242 356 231 350 226" stroke="#2a1f33" stroke-width="6" fill="none"/><path d="M294.5 259C310.5 277 340.5 283 352.5 258.5C360.5 242 356.5 231 350.5 226" stroke="#e020e0" stroke-width="4" fill="none" stroke-dasharray="1.8 0.9"/><path d="M316 207Q309 235 311 268" stroke="#40306a" stroke-width="1" fill="none"/><path d="M298 252L344 221" stroke="#60d0a0" stroke-width="0.8"/><ellipse cx="343.5" cy="218" rx="11" ry="7.5" transform="rotate(25 343.5 218)" fill="#e6a21a"/><path d="M319.4 208L338.9 216M327 203L342 211M330 234L342 226" stroke="#e020e0" stroke-width="4" stroke-linecap="round"/><path d="M319.4 208L338.9 216M327 203L342 211M330 234L342 226" stroke="#9a20a0" stroke-width="1" stroke-dasharray="1.5 1.5"/><path d="M345.4 221V172" stroke="#20e020" stroke-width="1.2"/><path d="M345.4 164L342.5 173H348.3Z" fill="#20e020"/><path d="M350 221H395" stroke="#e0e020" stroke-width="1.2"/><path d="M403 221L395 218V224Z" fill="#e0e020"/><rect x="340.4" y="216" width="10" height="10" fill="none" stroke="#60c8e0" stroke-width="0.8"/><path d="M345.4 218.5V223.5M342.9 221H347.9" stroke="#60c8e0" stroke-width="0.7"/><rect x="377" y="181" width="9" height="9" fill="#4a4ab8" stroke="#6a6ad8" stroke-width="0.6"/><path d="M182 467V457" stroke="#20d020" stroke-width="1.2"/><path d="M182 467H190" stroke="#e02020" stroke-width="1.2"/><circle cx="182" cy="466.5" r="1" fill="#2040e0"/></svg>
</div>
<div class="t" style="left:330px;top:472.5px;color:#f0f0f0;font-size:5.4px;font-weight:bold">front -Z</div>
<div class="t" style="left:686px;top:473px;color:#f0f0f0;font-size:5.4px;font-weight:bold">persp</div>
<div class="a" style="left:875.5px;top:78px;width:139.5px;height:406px;background:#444;"></div>
<svg style="left:979px;top:80px;" width="8" height="9" viewBox="0 0 8 9"><circle cx="4" cy="2" r="1.6" fill="#5c5"/><circle cx="1.8" cy="6.5" r="1.6" fill="#47c"/><circle cx="6.2" cy="6.5" r="1.6" fill="#c44"/><path d="M4 2L1.8 6.5M4 2L6.2 6.5" stroke="#ddd" stroke-width="0.6"/></svg>
<svg style="left:993px;top:80px;" width="9" height="9" viewBox="0 0 9 9"><circle cx="4.5" cy="4.5" r="3.6" fill="none" stroke="#2ab0c0" stroke-width="1.8"/><path d="M4.5 4.5L7 2" stroke="#ddd" stroke-width="1"/></svg>
<svg style="left:1005px;top:80px;" width="9" height="9" viewBox="0 0 9 9"><path d="M0.5 8.5L8 1" stroke="#2ab0c0" stroke-width="1.2"/><path d="M0.5 0.5V8.5H8.5" stroke="#888" stroke-width="0.6" fill="none"/></svg>
<div class="t" style="left:881.5px;top:93px;color:#cfcfcf">Channels</div>
<div class="t" style="left:914.6px;top:93px;color:#cfcfcf">Edit</div>
<div class="t" style="left:933.4px;top:93px;color:#cfcfcf">Object</div>
<div class="t" style="left:959.8px;top:93px;color:#cfcfcf">Show</div>
<div class="t" style="left:878.6px;top:104.3px;color:#e0e0e0;font-weight:bold;font-size:6.45px">ikHandle_leftShoulder</div>
<div class="a" style="left:973px;top:110.4px;width:4.4px;height:8px;background:#e0707c;"></div>
<div class="a" style="left:977.4px;top:110.4px;width:34.5px;height:8px;background:#2b2b2b;"></div>
<div class="a" style="left:977.4px;top:118.0px;width:34.5px;height:0.6px;background:#3a3a3a;"></div>
<div class="t" style="left:880px;top:112.20px;width:89.8px;text-align:right;color:#bdbdbd;font-size:5.6px">Translate X</div>
<div class="t" style="left:978.8px;top:112.0px;color:#dcdcdc">0.541</div>
<div class="a" style="left:973px;top:118.96000000000001px;width:4.4px;height:8px;background:#e0707c;"></div>
<div class="a" style="left:977.4px;top:118.96000000000001px;width:34.5px;height:8px;background:#2b2b2b;"></div>
<div class="a" style="left:977.4px;top:126.56px;width:34.5px;height:0.6px;background:#3a3a3a;"></div>
<div class="t" style="left:880px;top:120.76px;width:89.8px;text-align:right;color:#bdbdbd;font-size:5.6px">Translate Y</div>
<div class="t" style="left:978.8px;top:120.56px;color:#dcdcdc">1.307</div>
<div class="a" style="left:973px;top:127.52000000000001px;width:4.4px;height:8px;background:#e0707c;"></div>
<div class="a" style="left:977.4px;top:127.52000000000001px;width:34.5px;height:8px;background:#2b2b2b;"></div>
<div class="a" style="left:977.4px;top:135.12px;width:34.5px;height:0.6px;background:#3a3a3a;"></div>
<div class="t" style="left:880px;top:129.32px;width:89.8px;text-align:right;color:#bdbdbd;font-size:5.6px">Translate Z</div>
<div class="t" style="left:978.8px;top:129.12px;color:#dcdcdc">0.149</div>
<div class="a" style="left:973px;top:136.08px;width:4.4px;height:8px;background:#e0707c;"></div>
<div class="a" style="left:977.4px;top:136.08px;width:34.5px;height:8px;background:#2b2b2b;"></div>
<div class="a" style="left:977.4px;top:143.68px;width:34.5px;height:0.6px;background:#3a3a3a;"></div>
<div class="t" style="left:880px;top:137.88px;width:89.8px;text-align:right;color:#bdbdbd;font-size:5.6px">Rotate X</div>
<div class="t" style="left:978.8px;top:137.68px;color:#dcdcdc">0</div>
<div class="a" style="left:973px;top:144.64000000000001px;width:4.4px;height:8px;background:#e0707c;"></div>
<div class="a" style="left:977.4px;top:144.64000000000001px;width:34.5px;height:8px;background:#2b2b2b;"></div>
<div class="a" style="left:977.4px;top:152.24px;width:34.5px;height:0.6px;background:#3a3a3a;"></div>
<div class="t" style="left:880px;top:146.44px;width:89.8px;text-align:right;color:#bdbdbd;font-size:5.6px">Rotate Y</div>
<div class="t" style="left:978.8px;top:146.24px;color:#dcdcdc">0</div>
<div class="a" style="left:973px;top:153.20000000000002px;width:4.4px;height:8px;background:#e0707c;"></div>
<div class="a" style="left:977.4px;top:153.20000000000002px;width:34.5px;height:8px;background:#2b2b2b;"></div>
<div class="a" style="left:977.4px;top:160.8px;width:34.5px;height:0.6px;background:#3a3a3a;"></div>
<div class="t" style="left:880px;top:155.00px;width:89.8px;text-align:right;color:#bdbdbd;font-size:5.6px">Rotate Z</div>
<div class="t" style="left:978.8px;top:154.8px;color:#dcdcdc">0</div>
<div class="a" style="left:973px;top:161.76px;width:4.4px;height:8px;background:#e0707c;"></div>
<div class="a" style="left:977.4px;top:161.76px;width:34.5px;height:8px;background:#2b2b2b;"></div>
<div class="a" style="left:977.4px;top:169.35999999999999px;width:34.5px;height:0.6px;background:#3a3a3a;"></div>
<div class="t" style="left:880px;top:163.56px;width:89.8px;text-align:right;color:#bdbdbd;font-size:5.6px">Scale X</div>
<div class="t" style="left:978.8px;top:163.35999999999999px;color:#dcdcdc">1</div>
<div class="a" style="left:973px;top:170.32px;width:4.4px;height:8px;background:#e0707c;"></div>
<div class="a" style="left:977.4px;top:170.32px;width:34.5px;height:8px;background:#2b2b2b;"></div>
<div class="a" style="left:977.4px;top:177.92px;width:34.5px;height:0.6px;background:#3a3a3a;"></div>
<div class="t" style="left:880px;top:172.12px;width:89.8px;text-align:right;color:#bdbdbd;font-size:5.6px">Scale Y</div>
<div class="t" style="left:978.8px;top:171.92px;color:#dcdcdc">1</div>
<div class="a" style="left:973px;top:178.88px;width:4.4px;height:8px;background:#e0707c;"></div>
<div class="a" style="left:977.4px;top:178.88px;width:34.5px;height:8px;background:#2b2b2b;"></div>
<div class="a" style="left:977.4px;top:186.48px;width:34.5px;height:0.6px;background:#3a3a3a;"></div>
<div class="t" style="left:880px;top:180.68px;width:89.8px;text-align:right;color:#bdbdbd;font-size:5.6px">Scale Z</div>
<div class="t" style="left:978.8px;top:180.48px;color:#dcdcdc">1</div>
<div class="a" style="left:973px;top:187.44px;width:4.4px;height:8px;background:#e0707c;"></div>
<div class="a" style="left:977.4px;top:187.44px;width:34.5px;height:8px;background:#2b2b2b;"></div>
<div class="a" style="left:977.4px;top:195.04px;width:34.5px;height:0.6px;background:#3a3a3a;"></div>
<div class="t" style="left:880px;top:189.24px;width:89.8px;text-align:right;color:#bdbdbd;font-size:5.6px">Visibility</div>
<div class="t" style="left:978.8px;top:189.04px;color:#dcdcdc">on</div>
<div class="a" style="left:973px;top:196.0px;width:4.4px;height:8px;background:#e0707c;"></div>
<div class="a" style="left:977.4px;top:196.0px;width:34.5px;height:8px;background:#2b2b2b;"></div>
<div class="a" style="left:977.4px;top:203.6px;width:34.5px;height:0.6px;background:#3a3a3a;"></div>
<div class="t" style="left:880px;top:197.80px;width:89.8px;text-align:right;color:#bdbdbd;font-size:5.6px">Pole Vector X</div>
<div class="t" style="left:978.8px;top:197.6px;color:#dcdcdc">-0.992</div>
<div class="a" style="left:973px;top:204.56px;width:4.4px;height:8px;background:#e0707c;"></div>
<div class="a" style="left:977.4px;top:204.56px;width:34.5px;height:8px;background:#2b2b2b;"></div>
<div class="a" style="left:977.4px;top:212.16px;width:34.5px;height:0.6px;background:#3a3a3a;"></div>
<div class="t" style="left:880px;top:206.36px;width:89.8px;text-align:right;color:#bdbdbd;font-size:5.6px">Pole Vector Y</div>
<div class="t" style="left:978.8px;top:206.16px;color:#dcdcdc">-1.716</div>
<div class="a" style="left:973px;top:213.12px;width:4.4px;height:8px;background:#e0707c;"></div>
<div class="a" style="left:977.4px;top:213.12px;width:34.5px;height:8px;background:#2b2b2b;"></div>
<div class="a" style="left:977.4px;top:220.72px;width:34.5px;height:0.6px;background:#3a3a3a;"></div>
<div class="t" style="left:880px;top:214.92px;width:89.8px;text-align:right;color:#bdbdbd;font-size:5.6px">Pole Vector Z</div>
<div class="t" style="left:978.8px;top:214.72px;color:#dcdcdc">0.265</div>
<div class="a" style="left:973px;top:221.68px;width:4.4px;height:8px;background:#e0707c;"></div>
<div class="a" style="left:977.4px;top:221.68px;width:34.5px;height:8px;background:#2b2b2b;"></div>
<div class="a" style="left:977.4px;top:229.28px;width:34.5px;height:0.6px;background:#3a3a3a;"></div>
<div class="t" style="left:880px;top:223.48px;width:89.8px;text-align:right;color:#bdbdbd;font-size:5.6px">Offset</div>
<div class="t" style="left:978.8px;top:223.28px;color:#dcdcdc">0</div>
<div class="a" style="left:973px;top:230.24px;width:4.4px;height:8px;background:#e0707c;"></div>
<div class="a" style="left:977.4px;top:230.24px;width:34.5px;height:8px;background:#2b2b2b;"></div>
<div class="a" style="left:977.4px;top:237.84px;width:34.5px;height:0.6px;background:#3a3a3a;"></div>
<div class="t" style="left:880px;top:232.04px;width:89.8px;text-align:right;color:#bdbdbd;font-size:5.6px">Roll</div>
<div class="t" style="left:978.8px;top:231.84px;color:#dcdcdc">0</div>
<div class="a" style="left:973px;top:238.8px;width:4.4px;height:8px;background:#e0707c;"></div>
<div class="a" style="left:977.4px;top:238.8px;width:34.5px;height:8px;background:#2b2b2b;"></div>
<div class="a" style="left:977.4px;top:246.4px;width:34.5px;height:0.6px;background:#3a3a3a;"></div>
<div class="t" style="left:880px;top:240.60px;width:89.8px;text-align:right;color:#bdbdbd;font-size:5.6px">Twist</div>
<div class="t" style="left:978.8px;top:240.4px;color:#dcdcdc">0</div>
<div class="a" style="left:973px;top:247.36px;width:4.4px;height:8px;background:#e0707c;"></div>
<div class="a" style="left:977.4px;top:247.36px;width:34.5px;height:8px;background:#2b2b2b;"></div>
<div class="a" style="left:977.4px;top:254.96px;width:34.5px;height:0.6px;background:#3a3a3a;"></div>
<div class="t" style="left:880px;top:249.16px;width:89.8px;text-align:right;color:#bdbdbd;font-size:5.6px">Ik Blend</div>
<div class="t" style="left:978.8px;top:248.96px;color:#dcdcdc">1</div>
<div class="t" style="left:878.7px;top:257px;color:#e0e0e0;font-weight:bold;font-size:5.9px">INPUTS</div>
<div class="t" style="left:883.3px;top:265.6px;color:#e0e0e0;font-weight:bold;font-size:6.1px">ikRPsolver</div>
<div class="a" style="left:878px;top:280.7px;width:135px;height:62px;background:#2b2b2b;"></div>
<div class="a" style="left:878px;top:343px;width:135px;height:3px;background:#3a3a3a;"></div>
<div class="a" style="left:930px;top:344px;width:45px;height:1px;background:#555;"></div>
<div class="a" style="left:877px;top:347px;width:136.5px;height:135px;background:#3d3d3d;"></div>
<div class="a" style="left:879px;top:348.5px;width:30px;height:11px;background:#444;"></div>
<div class="t" style="left:882.5px;top:352.3px;color:#dcdcdc">Display</div>
<div class="t" style="left:916.5px;top:352.3px;color:#6e6e6e">Anim</div>
<div class="a" style="left:878px;top:359.5px;width:134.5px;height:123px;background:#444;"></div>
<div class="t" style="left:883px;top:362.3px;color:#c8c8c8">Layers</div>
<div class="t" style="left:908px;top:362.3px;color:#c8c8c8">Options</div>
<div class="t" style="left:937.5px;top:362.3px;color:#c8c8c8">Help</div>
<svg style="left:960px;top:373.5px;" width="9" height="6" viewBox="0 0 9 6"><path d="M0.5 3L4 0.5V5.5Z" fill="#ddd"/><rect x="3" y="1" width="3.5" height="4" fill="#ddd"/><circle cx="7" cy="2.5" r="1.5" fill="#2ab0c0"/></svg>
<svg style="left:973.5px;top:373.5px;" width="9" height="6" viewBox="0 0 9 6"><path d="M0.5 3L4 0.5V5.5Z" fill="#ddd"/><rect x="3" y="1" width="3.5" height="4" fill="#ddd"/><circle cx="7" cy="2.5" r="1.5" fill="#2ab0c0"/></svg>
<svg style="left:987.5px;top:373.5px;" width="9" height="6" viewBox="0 0 9 6"><path d="M0.5 3L4 0.5V5.5Z" fill="#ddd"/><rect x="3" y="1" width="3.5" height="4" fill="#ddd"/><circle cx="7" cy="2.5" r="1.5" fill="#2ab0c0"/></svg>
<svg style="left:999.5px;top:373.5px;" width="9" height="6" viewBox="0 0 9 6"><path d="M0.5 3L4 0.5V5.5Z" fill="#ddd"/><rect x="3" y="1" width="3.5" height="4" fill="#ddd"/><circle cx="7" cy="2.5" r="1.5" fill="#2ab0c0"/></svg>
<div class="a" style="left:880px;top:383.6px;width:131.5px;height:96px;background:#2b2b2b;"></div>
<div class="t" style="left:884.5px;top:387.4px;color:#e0e0e0">V</div>
<div class="a" style="left:894.5px;top:386.4px;width:9px;height:8px;background:#2f2f2f;"></div>
<div class="a" style="left:906.5px;top:386.4px;width:9px;height:8px;background:#2f2f2f;"></div>
<div class="a" style="left:918px;top:386.2px;width:9px;height:8.2px;background:#d000d0;"></div>
<div class="t" style="left:928.7px;top:387.29999999999995px;color:#e8e8e8;font-size:6.4px">robot_rigging_layer</div>
<div class="t" style="left:884.5px;top:398.0px;color:#e0e0e0">V</div>
<div class="t" style="left:897.5px;top:398.0px;color:#e0e0e0">P</div>
<div class="t" style="left:909.5px;top:398.0px;color:#e0e0e0">R</div>
<div class="a" style="left:918px;top:396.8px;width:9px;height:8.2px;background:#b02a0a;"></div>
<div class="t" style="left:928.7px;top:397.9px;color:#e8e8e8;font-size:6.4px">robot_model_layer</div>
<div class="a" style="left:880px;top:473.5px;width:131.5px;height:6px;background:#333;"></div>
<div class="a" style="left:886px;top:474.5px;width:90px;height:4.5px;background:#5a5a5a;"></div>
<svg style="left:881px;top:474.5px;" width="4" height="5" viewBox="0 0 4 5"><path d="M4 0L0.5 2.5L4 5Z" fill="#bbb"/></svg>
<svg style="left:1006px;top:474.5px;" width="4" height="5" viewBox="0 0 4 5"><path d="M0 0L3.5 2.5L0 5Z" fill="#bbb"/></svg>
<div class="a" style="left:1015px;top:78px;width:9px;height:406px;background:#3c3c3c;"></div>
<div class="a" style="left:1015px;top:78px;width:9px;height:85px;background:#444;"></div>
<div class="t" style="left:1023px;top:84.3px;transform-origin:0 0;transform:rotate(90deg);color:#dcdcdc;font-weight:bold;font-size:5.7px">Channel Box / Layer Editor</div>
<div class="t" style="left:1022.5px;top:169.4px;transform-origin:0 0;transform:rotate(90deg);color:#808080;font-size:6.3px">Modeling Toolkit</div>
<div class="t" style="left:1022.5px;top:224.6px;transform-origin:0 0;transform:rotate(90deg);color:#808080;font-size:6.6px">Attribute Editor</div>
<div class="a" style="left:1015px;top:163px;width:9px;height:1px;background:#333;"></div>
<div class="a" style="left:1015px;top:219px;width:9px;height:1px;background:#333;"></div>
<div class="a" style="left:1015px;top:275px;width:9px;height:1px;background:#333;"></div>
<div class="a" style="left:0px;top:482px;width:1024px;height:72px;background:#444;"></div>
<div class="a" style="left:0px;top:482px;width:1024px;height:2px;background:#363636;"></div>
<div class="a" style="left:7px;top:487.5px;width:859.3px;height:15.5px;background:#2d2d2d;"></div>
<div class="a" style="left:11.100000000000001px;top:487.5px;width:1.2px;height:15.5px;background:#d22;"></div>
<div class="t" style="left:15.9px;top:487.4px;color:#9a9a9a;font-size:5.2px">0</div>
<div class="a" style="left:38.74px;top:494.5px;width:1px;height:8px;background:#aaa;"></div>
<div class="t" style="left:43.34px;top:487.4px;color:#9a9a9a;font-size:5.2px">1</div>
<div class="a" style="left:66.18px;top:494.5px;width:1px;height:8px;background:#aaa;"></div>
<div class="t" style="left:70.78px;top:487.4px;color:#9a9a9a;font-size:5.2px">2</div>
<div class="a" style="left:93.62px;top:494.5px;width:1px;height:8px;background:#aaa;"></div>
<div class="t" style="left:98.22px;top:487.4px;color:#9a9a9a;font-size:5.2px">3</div>
<div class="a" style="left:121.06px;top:494.5px;width:1px;height:8px;background:#aaa;"></div>
<div class="t" style="left:125.66px;top:487.4px;color:#9a9a9a;font-size:5.2px">4</div>
<div class="a" style="left:148.50000000000003px;top:494.5px;width:1px;height:8px;background:#aaa;"></div>
<div class="t" style="left:153.10000000000002px;top:487.4px;color:#9a9a9a;font-size:5.2px">5</div>
<div class="a" style="left:175.94000000000003px;top:494.5px;width:1px;height:8px;background:#aaa;"></div>
<div class="t" style="left:180.54000000000002px;top:487.4px;color:#9a9a9a;font-size:5.2px">6</div>
<div class="a" style="left:203.38000000000002px;top:494.5px;width:1px;height:8px;background:#aaa;"></div>
<div class="t" style="left:207.98000000000002px;top:487.4px;color:#9a9a9a;font-size:5.2px">7</div>
<div class="a" style="left:230.82000000000002px;top:494.5px;width:1px;height:8px;background:#aaa;"></div>
<div class="t" style="left:235.42000000000002px;top:487.4px;color:#9a9a9a;font-size:5.2px">8</div>
<div class="a" style="left:258.26px;top:494.5px;width:1px;height:8px;background:#aaa;"></div>
<div class="t" style="left:262.86px;top:487.4px;color:#9a9a9a;font-size:5.2px">9</div>
<div class="a" style="left:285.70000000000005px;top:494.5px;width:1px;height:8px;background:#aaa;"></div>
<div class="t" style="left:290.30000000000007px;top:487.4px;color:#9a9a9a;font-size:5.2px">10</div>
<div class="a" style="left:313.14000000000004px;top:494.5px;width:1px;height:8px;background:#aaa;"></div>
<div class="t" style="left:317.74000000000007px;top:487.4px;color:#9a9a9a;font-size:5.2px">11</div>
<div class="a" style="left:340.38000000000005px;top:487.5px;width:1.2px;height:15.5px;background:#d22;"></div>
<div class="t" style="left:345.18000000000006px;top:487.4px;color:#9a9a9a;font-size:5.2px">12</div>
<div class="a" style="left:368.02000000000004px;top:494.5px;width:1px;height:8px;background:#aaa;"></div>
<div class="t" style="left:372.62000000000006px;top:487.4px;color:#9a9a9a;font-size:5.2px">13</div>
<div class="a" style="left:395.46000000000004px;top:494.5px;width:1px;height:8px;background:#aaa;"></div>
<div class="t" style="left:400.06000000000006px;top:487.4px;color:#9a9a9a;font-size:5.2px">14</div>
<div class="a" style="left:422.90000000000003px;top:494.5px;width:1px;height:8px;background:#aaa;"></div>
<div class="t" style="left:427.50000000000006px;top:487.4px;color:#9a9a9a;font-size:5.2px">15</div>
<div class="a" style="left:450.34000000000003px;top:494.5px;width:1px;height:8px;background:#aaa;"></div>
<div class="t" style="left:454.94000000000005px;top:487.4px;color:#9a9a9a;font-size:5.2px">16</div>
<div class="a" style="left:477.78000000000003px;top:494.5px;width:1px;height:8px;background:#aaa;"></div>
<div class="t" style="left:482.38000000000005px;top:487.4px;color:#9a9a9a;font-size:5.2px">17</div>
<div class="a" style="left:505.22px;top:487.5px;width:27.44px;height:15.5px;background:#696969;"></div>
<div class="t" style="left:513.22px;top:496px;color:#f0f0f0;font-size:5.6px">18</div>
<div class="a" style="left:505.22px;top:494.5px;width:1px;height:8px;background:#aaa;"></div>
<div class="t" style="left:509.82000000000005px;top:487.4px;color:#9a9a9a;font-size:5.2px">18</div>
<div class="a" style="left:532.4599999999999px;top:487.5px;width:1.2px;height:15.5px;background:#d22;"></div>
<div class="t" style="left:537.26px;top:487.4px;color:#9a9a9a;font-size:5.2px">19</div>
<div class="a" style="left:560.1px;top:494.5px;width:1px;height:8px;background:#aaa;"></div>
<div class="t" style="left:564.7px;top:487.4px;color:#9a9a9a;font-size:5.2px">20</div>
<div class="a" style="left:587.54px;top:494.5px;width:1px;height:8px;background:#aaa;"></div>
<div class="t" style="left:592.14px;top:487.4px;color:#9a9a9a;font-size:5.2px">21</div>
<div class="a" style="left:614.98px;top:494.5px;width:1px;height:8px;background:#aaa;"></div>
<div class="t" style="left:619.58px;top:487.4px;color:#9a9a9a;font-size:5.2px">22</div>
<div class="a" style="left:642.42px;top:494.5px;width:1px;height:8px;background:#aaa;"></div>
<div class="t" style="left:647.02px;top:487.4px;color:#9a9a9a;font-size:5.2px">23</div>
<div class="a" style="left:669.86px;top:494.5px;width:1px;height:8px;background:#aaa;"></div>
<div class="t" style="left:674.46px;top:487.4px;color:#9a9a9a;font-size:5.2px">24</div>
<div class="a" style="left:697.0999999999999px;top:487.5px;width:1.2px;height:15.5px;background:#d22;"></div>
<div class="t" style="left:701.9px;top:487.4px;color:#9a9a9a;font-size:5.2px">25</div>
<div class="a" style="left:724.74px;top:494.5px;width:1px;height:8px;background:#aaa;"></div>
<div class="t" style="left:729.34px;top:487.4px;color:#9a9a9a;font-size:5.2px">26</div>
<div class="a" style="left:752.18px;top:494.5px;width:1px;height:8px;background:#aaa;"></div>
<div class="t" style="left:756.78px;top:487.4px;color:#9a9a9a;font-size:5.2px">27</div>
<div class="a" style="left:779.62px;top:494.5px;width:1px;height:8px;background:#aaa;"></div>
<div class="t" style="left:784.22px;top:487.4px;color:#9a9a9a;font-size:5.2px">28</div>
<div class="a" style="left:807.06px;top:494.5px;width:1px;height:8px;background:#aaa;"></div>
<div class="t" style="left:811.66px;top:487.4px;color:#9a9a9a;font-size:5.2px">29</div>
<div class="a" style="left:834.3px;top:487.5px;width:1.2px;height:15.5px;background:#d22;"></div>
<div class="t" style="left:839.1px;top:487.4px;color:#9a9a9a;font-size:5.2px">30</div>
<div class="a" style="left:870.5px;top:490.4px;width:46.5px;height:9.8px;background:#2b2b2b;"></div>
<div class="t" style="left:873.5px;top:492.8px;color:#bbb;font-size:5.6px">18</div>
<svg style="left:922.0px;top:491.7px;" width="10" height="7" viewBox="0 0 10 7"><path d="M0.5 0.5V6.5M6 0.5L2.5 3.5L6 6.5Z M9.5 0.5L6 3.5L9.5 6.5Z" stroke="#cfcfcf" stroke-width="0.9" fill="#cfcfcf"/></svg>
<svg style="left:935.0px;top:491.7px;" width="10" height="7" viewBox="0 0 10 7"><path d="M0.5 0.5V6.5" stroke="#cfcfcf" stroke-width="1.2"/><path d="M7 0.5L2.5 3.5L7 6.5Z" fill="#cfcfcf"/></svg>
<svg style="left:946.8px;top:491.7px;" width="10" height="7" viewBox="0 0 10 7"><path d="M0.8 0V7" stroke="#e87a30" stroke-width="1.2"/><path d="M7 0.5L2.5 3.5L7 6.5Z" fill="#cfcfcf"/></svg>
<svg style="left:959.9px;top:491.7px;" width="10" height="7" viewBox="0 0 10 7"><path d="M7 0L1 3.5L7 7Z" fill="#cfcfcf"/></svg>
<svg style="left:971.1px;top:491.7px;" width="10" height="7" viewBox="0 0 10 7"><path d="M1 0L7 3.5L1 7Z" fill="#cfcfcf"/></svg>
<svg style="left:983.8px;top:491.7px;" width="10" height="7" viewBox="0 0 10 7"><path d="M1 0.5L5.5 3.5L1 6.5Z" fill="#cfcfcf"/><path d="M6.5 0V7" stroke="#e87a30" stroke-width="1.2"/></svg>
<svg style="left:996.0px;top:491.7px;" width="10" height="7" viewBox="0 0 10 7"><path d="M1 0.5L5.5 3.5L1 6.5Z" fill="#cfcfcf"/><path d="M6.5 0.5V6.5" stroke="#cfcfcf" stroke-width="1.2"/></svg>
<svg style="left:1008.0px;top:491.7px;" width="10" height="7" viewBox="0 0 10 7"><path d="M0.5 0.5L4 3.5L0.5 6.5Z M4 0.5L7.5 3.5L4 6.5Z M9 0.5V6.5" stroke="#cfcfcf" stroke-width="0.9" fill="#cfcfcf"/></svg>
<div class="a" style="left:0px;top:503px;width:1024px;height:2px;background:#3a3a3a;"></div>
<div class="a" style="left:7px;top:505.5px;width:1017px;height:17px;background:#3c3c3c;"></div>
<div class="a" style="left:8px;top:508px;width:46px;height:12.5px;background:#2b2b2b;"></div>
<div class="t" style="left:10.5px;top:511.3px;color:#bbb;font-size:6.1px">0</div>
<div class="a" style="left:58.6px;top:508px;width:46.4px;height:12.5px;background:#2b2b2b;"></div>
<div class="t" style="left:61px;top:511.3px;color:#bbb;font-size:6.1px">0</div>
<div class="a" style="left:112px;top:508.8px;width:538px;height:10.6px;background:#5a5a5a;"></div>
<div class="a" style="left:114.6px;top:510.6px;width:7.6px;height:7px;background:#8a8a8a;"></div>
<div class="t" style="left:123.5px;top:511.3px;color:#ccc;font-size:6.1px">0</div>
<div class="a" style="left:640.5px;top:510.6px;width:8.5px;height:7px;background:#9a9a9a;"></div>
<div class="t" style="left:631px;top:511.3px;color:#ddd;font-size:6.1px">30</div>
<div class="a" style="left:657px;top:508px;width:47px;height:12.5px;background:#2b2b2b;"></div>
<div class="t" style="left:659px;top:511.3px;color:#ccc;font-size:6.1px">30</div>
<div class="a" style="left:709px;top:508px;width:47px;height:12.5px;background:#2b2b2b;"></div>
<div class="t" style="left:711px;top:511.3px;color:#ccc;font-size:6.1px">30</div>
<div class="sp" style="left:759px;top:508px;height:12px;background:#888"></div>
<div class="a" style="left:765px;top:508px;width:11px;height:12.5px;background:#4a4a4a;"></div>
<svg style="left:767.5px;top:512.5px;" width="6" height="3.5" viewBox="0 0 6 3.5"><path d="M0 0H6L3 3.5Z" fill="#999"/></svg>
<div class="a" style="left:776px;top:508px;width:53px;height:12.5px;background:#4a4a4a;"></div>
<div class="t" style="left:778.5px;top:511.5px;color:#cfcfcf;font-size:5.9px">No Character Set</div>
<div class="a" style="left:831px;top:508px;width:12px;height:12.5px;background:#4a4a4a;"></div>
<svg style="left:834px;top:512.5px;" width="6" height="3.5" viewBox="0 0 6 3.5"><path d="M0 0H6L3 3.5Z" fill="#999"/></svg>
<div class="a" style="left:844px;top:508px;width:53.6px;height:12.5px;background:#4a4a4a;"></div>
<div class="t" style="left:846.5px;top:511.5px;color:#cfcfcf;font-size:5.9px">No Anim Layer</div>
<div class="sp" style="left:904.6px;top:508px;height:12px;background:#888"></div>
<div class="a" style="left:911px;top:508.8px;width:50.7px;height:10.4px;background:#555;"></div>
<div class="a" style="left:952px;top:508.8px;width:9.7px;height:10.4px;background:#5c5c5c;"></div>
<svg style="left:954px;top:512.5px;" width="6" height="3.5" viewBox="0 0 6 3.5"><path d="M0 0H6L3 3.5Z" fill="#ddd"/></svg>
<div class="t" style="left:913px;top:511.6px;color:#aaa;font-size:5.9px">25 fps</div>
<svg style="left:969.5px;top:510.5px;" width="10" height="8" viewBox="0 0 10 8"><path d="M2 2H8A2 2 0 0 1 8 6H2A2 2 0 0 1 2 2Z" stroke="#ddd" stroke-width="1.1" fill="none"/></svg>
<div class="sp" style="left:986px;top:508px;height:12px;background:#888"></div>
<svg style="left:992.5px;top:509px;" width="10" height="10" viewBox="0 0 10 10"><circle cx="5" cy="5" r="4.2" fill="none" stroke="#ccc" stroke-width="1" stroke-dasharray="5 1.5"/><path d="M5 2V5.5" stroke="#e87a30" stroke-width="1.3"/><circle cx="5" cy="6.5" r="1" fill="#e87a30"/></svg>
<svg style="left:1007.5px;top:509px;" width="11" height="10" viewBox="0 0 11 10"><circle cx="3" cy="2" r="1.8" fill="#ccc"/><path d="M5 3L8 4.5L6.5 7.5L8.5 10M6 5L3.5 7.5L1 7" stroke="#e87a30" stroke-width="1.8" fill="none"/></svg>
<div class="a" style="left:0px;top:522px;width:1024px;height:2px;background:#3a3a3a;"></div>
<div class="sp" style="left:3px;top:525px;height:13px;background:#555"></div>
<div class="t" style="left:12.8px;top:530px;color:#e0e0e0;font-size:6.2px">MEL</div>
<div class="a" style="left:32px;top:526.6px;width:353px;height:11.6px;background:#2b2b2b;"></div>
<div class="a" style="left:390.6px;top:526.6px;width:616px;height:11.6px;background:#2b2b2b;"></div>
<div class="t" style="left:392.6px;top:530px;color:#d8d8d8;font-size:6px">// Result: 17</div>
<svg style="left:1009.5px;top:527px;" width="10" height="10" viewBox="0 0 10 10"><rect x="0.5" y="0.5" width="9" height="9" fill="#ddd"/><rect x="1.5" y="2.5" width="7" height="6" fill="#999"/><path d="M3.5 2.5V8.5M6.5 2.5V8.5" stroke="#ddd" stroke-width="0.8"/></svg>
<div class="a" style="left:0px;top:540px;width:1024px;height:14px;background:#444;"></div>
<div class="a" style="left:0px;top:539.5px;width:1024px;height:1px;background:#3a3a3a;"></div>
<div class="sp" style="left:3px;top:542px;height:11px;background:#555"></div>
<div class="t" style="left:12.8px;top:545.5px;color:#b0b0b0;font-size:5.38px">Move Tool: Use manipulator to move object(s). Ctrl+MMB+drag to move components along normals. Shift+drag manipulator axis or plane handles to extrude components or clone objects. Ctrl+Shift+LMB+drag to constrain movement to a connected edge. Use D or INSERT to change the pivot position and axis orientation.</div>
</body></html>
